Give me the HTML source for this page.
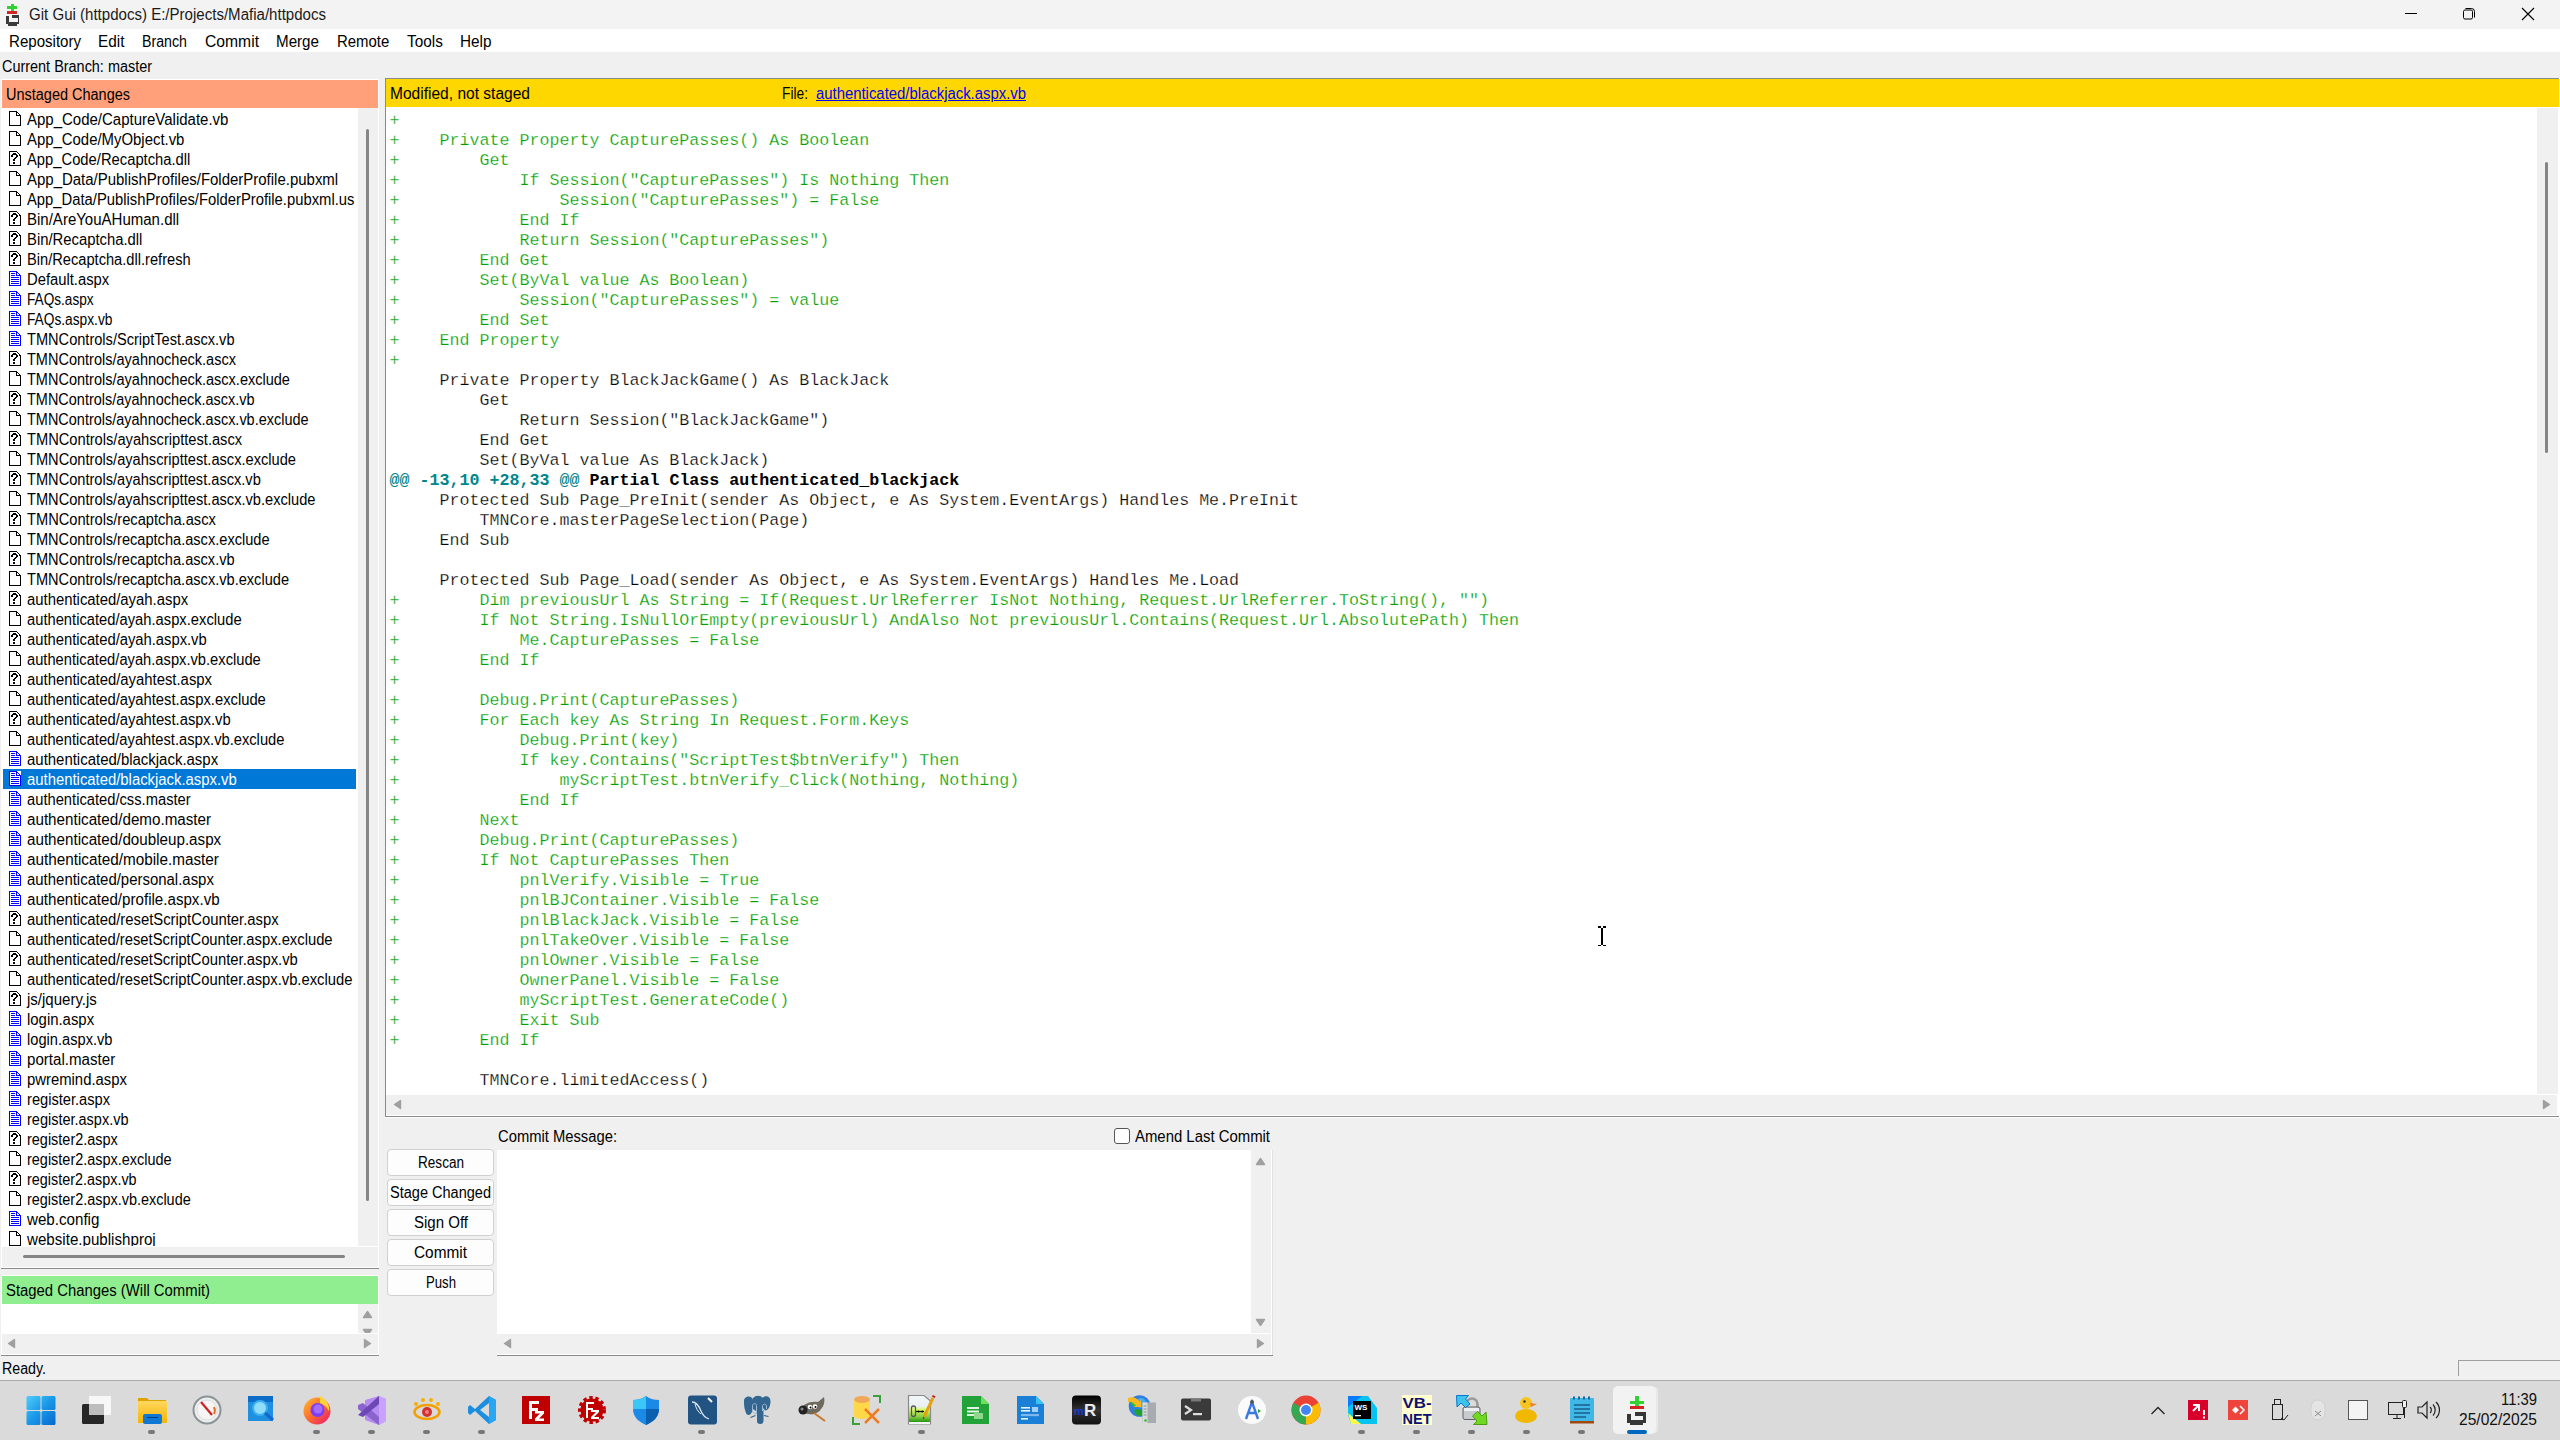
<!DOCTYPE html><html><head><meta charset="utf-8"><style>
*{margin:0;padding:0;box-sizing:border-box}
html,body{width:2560px;height:1440px;overflow:hidden;background:#f0f0f0;position:relative;
font-family:"Liberation Sans",sans-serif;font-size:16px;color:#000}
.a{position:absolute}
.t{position:absolute;white-space:pre;line-height:20px;height:20px}
.mono{font-family:"Liberation Mono",monospace;font-size:16.667px;white-space:pre;line-height:20px;-webkit-text-stroke:0.25px #fff}
.btn{position:absolute;left:387px;width:107px;height:27px;border:1px solid #d0d0d0;border-radius:4px;background:#fdfdfd;
 text-align:center;line-height:25px}
svg{position:absolute;overflow:visible}
</style></head><body>
<div class="a" style="left:0;top:0;width:2560px;height:29px;background:#f3f3f3"></div>
<svg style="left:0;top:0" width="30" height="30" viewBox="0 0 30 30">
<rect x="7" y="6" width="10" height="3" fill="#2fd02f"/><rect x="11" y="4" width="3" height="8" fill="#2fd02f"/>
<rect x="7" y="11" width="10" height="3" fill="#d42525"/>
<path d="M6 16h3v6h9v-4h-6v-3h7v9H17v2H8v-2H6z" fill="#3a3a3a"/>
</svg>
<div class="t" style="left:29.00px;top:5.46px;transform:scaleX(0.9408);transform-origin:0 0;color:#1a1a1a">Git Gui (httpdocs) E:/Projects/Mafia/httpdocs</div>
<div class="a" style="left:2405px;top:13px;width:12px;height:1px;background:#000"></div>
<svg style="left:2460px;top:6px" width="20" height="16" viewBox="0 0 20 16">
<rect x="3.5" y="4" width="9" height="9" rx="1.5" fill="none" stroke="#000" stroke-width="1"/>
<path d="M5.5 2.5h6a3 3 0 0 1 3 3v6" fill="none" stroke="#000" stroke-width="1"/></svg>
<svg style="left:2520px;top:6px" width="16" height="16" viewBox="0 0 16 16">
<path d="M2 2L14 14M14 2L2 14" stroke="#000" stroke-width="1.1"/></svg>
<div class="a" style="left:0;top:29px;width:2560px;height:23px;background:#fff"></div>
<div class="t" style="left:8.50px;top:32.46px;transform:scaleX(0.9415);transform-origin:0 0;">Repository</div>
<div class="t" style="left:98.10px;top:32.46px;transform:scaleX(0.9576);transform-origin:0 0;">Edit</div>
<div class="t" style="left:142.10px;top:32.46px;transform:scaleX(0.8857);transform-origin:0 0;">Branch</div>
<div class="t" style="left:204.50px;top:32.46px;transform:scaleX(0.9799);transform-origin:0 0;">Commit</div>
<div class="t" style="left:275.50px;top:32.46px;transform:scaleX(0.9481);transform-origin:0 0;">Merge</div>
<div class="t" style="left:337.00px;top:32.46px;transform:scaleX(0.9318);transform-origin:0 0;">Remote</div>
<div class="t" style="left:406.50px;top:32.46px;transform:scaleX(0.9585);transform-origin:0 0;">Tools</div>
<div class="t" style="left:460.00px;top:32.46px;transform:scaleX(0.9573);transform-origin:0 0;">Help</div>
<div class="t" style="left:1.50px;top:57.46px;transform:scaleX(0.9021);transform-origin:0 0;">Current Branch: master</div>
<div class="a" style="left:1px;top:79px;width:378px;height:1190px;background:#fff"></div>
<div class="a" style="left:2px;top:80px;width:376px;height:28px;background:#ffa07a"></div>
<div class="t" style="left:6.00px;top:85.46px;transform:scaleX(0.9052);transform-origin:0 0;">Unstaged Changes</div>
<div class="a" style="left:2px;top:108px;width:356px;height:1138px;overflow:hidden">
<svg style="left:7px;top:3px" width="12" height="15" viewBox="0 0 12 15" shape-rendering="crispEdges"><path d="M4 0h1v1h-1zM9 2h1v1h-1zM0 2h1v1h-1zM0 5h1v1h-1zM9 14h1v1h-1zM1 0h1v1h-1zM10 3h1v1h-1zM0 8h1v1h-1zM0 14h1v1h-1zM11 14h1v1h-1zM11 5h1v1h-1zM0 11h1v1h-1zM11 8h1v1h-1zM2 14h1v1h-1zM11 11h1v1h-1zM7 4h1v1h-1zM7 1h1v1h-1zM6 14h1v1h-1zM3 0h1v1h-1zM5 0h1v1h-1zM4 14h1v1h-1zM11 4h1v1h-1zM9 4h1v1h-1zM0 1h1v1h-1zM0 7h1v1h-1zM8 14h1v1h-1zM11 7h1v1h-1zM0 4h1v1h-1zM0 10h1v1h-1zM11 10h1v1h-1zM10 14h1v1h-1zM0 13h1v1h-1zM11 13h1v1h-1zM7 0h1v1h-1zM1 14h1v1h-1zM7 3h1v1h-1zM3 14h1v1h-1zM8 4h1v1h-1zM0 0h1v1h-1zM5 14h1v1h-1zM10 4h1v1h-1zM8 1h1v1h-1zM0 3h1v1h-1zM2 0h1v1h-1zM0 9h1v1h-1zM11 9h1v1h-1zM0 6h1v1h-1zM0 12h1v1h-1zM11 6h1v1h-1zM11 12h1v1h-1zM7 2h1v1h-1zM6 0h1v1h-1zM7 14h1v1h-1z" fill="#000"/></svg>
<div class="t" style="left:25px;top:2.46px;transform:scaleX(0.9369);transform-origin:0 0;">App_Code/CaptureValidate.vb</div>
<svg style="left:7px;top:23px" width="12" height="15" viewBox="0 0 12 15" shape-rendering="crispEdges"><path d="M4 0h1v1h-1zM9 2h1v1h-1zM0 2h1v1h-1zM0 5h1v1h-1zM9 14h1v1h-1zM1 0h1v1h-1zM10 3h1v1h-1zM0 8h1v1h-1zM0 14h1v1h-1zM11 14h1v1h-1zM11 5h1v1h-1zM0 11h1v1h-1zM11 8h1v1h-1zM2 14h1v1h-1zM11 11h1v1h-1zM7 4h1v1h-1zM7 1h1v1h-1zM6 14h1v1h-1zM3 0h1v1h-1zM5 0h1v1h-1zM4 14h1v1h-1zM11 4h1v1h-1zM9 4h1v1h-1zM0 1h1v1h-1zM0 7h1v1h-1zM8 14h1v1h-1zM11 7h1v1h-1zM0 4h1v1h-1zM0 10h1v1h-1zM11 10h1v1h-1zM10 14h1v1h-1zM0 13h1v1h-1zM11 13h1v1h-1zM7 0h1v1h-1zM1 14h1v1h-1zM7 3h1v1h-1zM3 14h1v1h-1zM8 4h1v1h-1zM0 0h1v1h-1zM5 14h1v1h-1zM10 4h1v1h-1zM8 1h1v1h-1zM0 3h1v1h-1zM2 0h1v1h-1zM0 9h1v1h-1zM11 9h1v1h-1zM0 6h1v1h-1zM0 12h1v1h-1zM11 6h1v1h-1zM11 12h1v1h-1zM7 2h1v1h-1zM6 0h1v1h-1zM7 14h1v1h-1z" fill="#000"/></svg>
<div class="t" style="left:25px;top:22.46px;transform:scaleX(0.9315);transform-origin:0 0;">App_Code/MyObject.vb</div>
<svg style="left:7px;top:43px" width="12" height="15" viewBox="0 0 12 15" shape-rendering="crispEdges"><path d="M4 0h1v1h-1zM3 4h1v1h-1zM4 3h1v1h-1zM4 9h1v1h-1zM4 12h1v1h-1zM9 2h1v1h-1zM5 7h1v1h-1zM0 2h1v1h-1zM0 5h1v1h-1zM9 14h1v1h-1zM1 0h1v1h-1zM10 3h1v1h-1zM0 8h1v1h-1zM0 14h1v1h-1zM11 14h1v1h-1zM11 5h1v1h-1zM0 11h1v1h-1zM11 8h1v1h-1zM2 14h1v1h-1zM11 11h1v1h-1zM6 2h1v1h-1zM7 4h1v1h-1zM2 5h1v1h-1zM6 14h1v1h-1zM4 2h1v1h-1zM3 0h1v1h-1zM3 3h1v1h-1zM5 0h1v1h-1zM4 8h1v1h-1zM4 14h1v1h-1zM5 3h1v1h-1zM5 9h1v1h-1zM4 11h1v1h-1zM11 4h1v1h-1zM8 5h1v1h-1zM5 12h1v1h-1zM0 1h1v1h-1zM0 7h1v1h-1zM8 14h1v1h-1zM11 7h1v1h-1zM0 4h1v1h-1zM0 10h1v1h-1zM11 10h1v1h-1zM10 14h1v1h-1zM2 4h1v1h-1zM0 13h1v1h-1zM11 13h1v1h-1zM7 0h1v1h-1zM1 14h1v1h-1zM7 3h1v1h-1zM6 7h1v1h-1zM7 6h1v1h-1zM5 8h1v1h-1zM3 5h1v1h-1zM5 2h1v1h-1zM3 14h1v1h-1zM8 4h1v1h-1zM5 11h1v1h-1zM0 0h1v1h-1zM5 14h1v1h-1zM10 4h1v1h-1zM8 1h1v1h-1zM0 3h1v1h-1zM2 0h1v1h-1zM0 9h1v1h-1zM11 9h1v1h-1zM0 6h1v1h-1zM0 12h1v1h-1zM11 6h1v1h-1zM11 12h1v1h-1zM6 0h1v1h-1zM6 6h1v1h-1zM7 5h1v1h-1zM6 3h1v1h-1zM7 14h1v1h-1z" fill="#000"/></svg>
<div class="t" style="left:25px;top:42.46px;transform:scaleX(0.9231);transform-origin:0 0;">App_Code/Recaptcha.dll</div>
<svg style="left:7px;top:63px" width="12" height="15" viewBox="0 0 12 15" shape-rendering="crispEdges"><path d="M4 0h1v1h-1zM9 2h1v1h-1zM0 2h1v1h-1zM0 5h1v1h-1zM9 14h1v1h-1zM1 0h1v1h-1zM10 3h1v1h-1zM0 8h1v1h-1zM0 14h1v1h-1zM11 14h1v1h-1zM11 5h1v1h-1zM0 11h1v1h-1zM11 8h1v1h-1zM2 14h1v1h-1zM11 11h1v1h-1zM7 4h1v1h-1zM7 1h1v1h-1zM6 14h1v1h-1zM3 0h1v1h-1zM5 0h1v1h-1zM4 14h1v1h-1zM11 4h1v1h-1zM9 4h1v1h-1zM0 1h1v1h-1zM0 7h1v1h-1zM8 14h1v1h-1zM11 7h1v1h-1zM0 4h1v1h-1zM0 10h1v1h-1zM11 10h1v1h-1zM10 14h1v1h-1zM0 13h1v1h-1zM11 13h1v1h-1zM7 0h1v1h-1zM1 14h1v1h-1zM7 3h1v1h-1zM3 14h1v1h-1zM8 4h1v1h-1zM0 0h1v1h-1zM5 14h1v1h-1zM10 4h1v1h-1zM8 1h1v1h-1zM0 3h1v1h-1zM2 0h1v1h-1zM0 9h1v1h-1zM11 9h1v1h-1zM0 6h1v1h-1zM0 12h1v1h-1zM11 6h1v1h-1zM11 12h1v1h-1zM7 2h1v1h-1zM6 0h1v1h-1zM7 14h1v1h-1z" fill="#000"/></svg>
<div class="t" style="left:25px;top:62.46px;transform:scaleX(0.9355);transform-origin:0 0;">App_Data/PublishProfiles/FolderProfile.pubxml</div>
<svg style="left:7px;top:83px" width="12" height="15" viewBox="0 0 12 15" shape-rendering="crispEdges"><path d="M4 0h1v1h-1zM9 2h1v1h-1zM0 2h1v1h-1zM0 5h1v1h-1zM9 14h1v1h-1zM1 0h1v1h-1zM10 3h1v1h-1zM0 8h1v1h-1zM0 14h1v1h-1zM11 14h1v1h-1zM11 5h1v1h-1zM0 11h1v1h-1zM11 8h1v1h-1zM2 14h1v1h-1zM11 11h1v1h-1zM7 4h1v1h-1zM7 1h1v1h-1zM6 14h1v1h-1zM3 0h1v1h-1zM5 0h1v1h-1zM4 14h1v1h-1zM11 4h1v1h-1zM9 4h1v1h-1zM0 1h1v1h-1zM0 7h1v1h-1zM8 14h1v1h-1zM11 7h1v1h-1zM0 4h1v1h-1zM0 10h1v1h-1zM11 10h1v1h-1zM10 14h1v1h-1zM0 13h1v1h-1zM11 13h1v1h-1zM7 0h1v1h-1zM1 14h1v1h-1zM7 3h1v1h-1zM3 14h1v1h-1zM8 4h1v1h-1zM0 0h1v1h-1zM5 14h1v1h-1zM10 4h1v1h-1zM8 1h1v1h-1zM0 3h1v1h-1zM2 0h1v1h-1zM0 9h1v1h-1zM11 9h1v1h-1zM0 6h1v1h-1zM0 12h1v1h-1zM11 6h1v1h-1zM11 12h1v1h-1zM7 2h1v1h-1zM6 0h1v1h-1zM7 14h1v1h-1z" fill="#000"/></svg>
<div class="t" style="left:25px;top:82.46px;transform:scaleX(0.9250);transform-origin:0 0;">App_Data/PublishProfiles/FolderProfile.pubxml.us</div>
<svg style="left:7px;top:103px" width="12" height="15" viewBox="0 0 12 15" shape-rendering="crispEdges"><path d="M4 0h1v1h-1zM3 4h1v1h-1zM4 3h1v1h-1zM4 9h1v1h-1zM4 12h1v1h-1zM9 2h1v1h-1zM5 7h1v1h-1zM0 2h1v1h-1zM0 5h1v1h-1zM9 14h1v1h-1zM1 0h1v1h-1zM10 3h1v1h-1zM0 8h1v1h-1zM0 14h1v1h-1zM11 14h1v1h-1zM11 5h1v1h-1zM0 11h1v1h-1zM11 8h1v1h-1zM2 14h1v1h-1zM11 11h1v1h-1zM6 2h1v1h-1zM7 4h1v1h-1zM2 5h1v1h-1zM6 14h1v1h-1zM4 2h1v1h-1zM3 0h1v1h-1zM3 3h1v1h-1zM5 0h1v1h-1zM4 8h1v1h-1zM4 14h1v1h-1zM5 3h1v1h-1zM5 9h1v1h-1zM4 11h1v1h-1zM11 4h1v1h-1zM8 5h1v1h-1zM5 12h1v1h-1zM0 1h1v1h-1zM0 7h1v1h-1zM8 14h1v1h-1zM11 7h1v1h-1zM0 4h1v1h-1zM0 10h1v1h-1zM11 10h1v1h-1zM10 14h1v1h-1zM2 4h1v1h-1zM0 13h1v1h-1zM11 13h1v1h-1zM7 0h1v1h-1zM1 14h1v1h-1zM7 3h1v1h-1zM6 7h1v1h-1zM7 6h1v1h-1zM5 8h1v1h-1zM3 5h1v1h-1zM5 2h1v1h-1zM3 14h1v1h-1zM8 4h1v1h-1zM5 11h1v1h-1zM0 0h1v1h-1zM5 14h1v1h-1zM10 4h1v1h-1zM8 1h1v1h-1zM0 3h1v1h-1zM2 0h1v1h-1zM0 9h1v1h-1zM11 9h1v1h-1zM0 6h1v1h-1zM0 12h1v1h-1zM11 6h1v1h-1zM11 12h1v1h-1zM6 0h1v1h-1zM6 6h1v1h-1zM7 5h1v1h-1zM6 3h1v1h-1zM7 14h1v1h-1z" fill="#000"/></svg>
<div class="t" style="left:25px;top:102.46px;transform:scaleX(0.9382);transform-origin:0 0;">Bin/AreYouAHuman.dll</div>
<svg style="left:7px;top:123px" width="12" height="15" viewBox="0 0 12 15" shape-rendering="crispEdges"><path d="M4 0h1v1h-1zM3 4h1v1h-1zM4 3h1v1h-1zM4 9h1v1h-1zM4 12h1v1h-1zM9 2h1v1h-1zM5 7h1v1h-1zM0 2h1v1h-1zM0 5h1v1h-1zM9 14h1v1h-1zM1 0h1v1h-1zM10 3h1v1h-1zM0 8h1v1h-1zM0 14h1v1h-1zM11 14h1v1h-1zM11 5h1v1h-1zM0 11h1v1h-1zM11 8h1v1h-1zM2 14h1v1h-1zM11 11h1v1h-1zM6 2h1v1h-1zM7 4h1v1h-1zM2 5h1v1h-1zM6 14h1v1h-1zM4 2h1v1h-1zM3 0h1v1h-1zM3 3h1v1h-1zM5 0h1v1h-1zM4 8h1v1h-1zM4 14h1v1h-1zM5 3h1v1h-1zM5 9h1v1h-1zM4 11h1v1h-1zM11 4h1v1h-1zM8 5h1v1h-1zM5 12h1v1h-1zM0 1h1v1h-1zM0 7h1v1h-1zM8 14h1v1h-1zM11 7h1v1h-1zM0 4h1v1h-1zM0 10h1v1h-1zM11 10h1v1h-1zM10 14h1v1h-1zM2 4h1v1h-1zM0 13h1v1h-1zM11 13h1v1h-1zM7 0h1v1h-1zM1 14h1v1h-1zM7 3h1v1h-1zM6 7h1v1h-1zM7 6h1v1h-1zM5 8h1v1h-1zM3 5h1v1h-1zM5 2h1v1h-1zM3 14h1v1h-1zM8 4h1v1h-1zM5 11h1v1h-1zM0 0h1v1h-1zM5 14h1v1h-1zM10 4h1v1h-1zM8 1h1v1h-1zM0 3h1v1h-1zM2 0h1v1h-1zM0 9h1v1h-1zM11 9h1v1h-1zM0 6h1v1h-1zM0 12h1v1h-1zM11 6h1v1h-1zM11 12h1v1h-1zM6 0h1v1h-1zM6 6h1v1h-1zM7 5h1v1h-1zM6 3h1v1h-1zM7 14h1v1h-1z" fill="#000"/></svg>
<div class="t" style="left:25px;top:122.46px;transform:scaleX(0.9268);transform-origin:0 0;">Bin/Recaptcha.dll</div>
<svg style="left:7px;top:143px" width="12" height="15" viewBox="0 0 12 15" shape-rendering="crispEdges"><path d="M4 0h1v1h-1zM3 4h1v1h-1zM4 3h1v1h-1zM4 9h1v1h-1zM4 12h1v1h-1zM9 2h1v1h-1zM5 7h1v1h-1zM0 2h1v1h-1zM0 5h1v1h-1zM9 14h1v1h-1zM1 0h1v1h-1zM10 3h1v1h-1zM0 8h1v1h-1zM0 14h1v1h-1zM11 14h1v1h-1zM11 5h1v1h-1zM0 11h1v1h-1zM11 8h1v1h-1zM2 14h1v1h-1zM11 11h1v1h-1zM6 2h1v1h-1zM7 4h1v1h-1zM2 5h1v1h-1zM6 14h1v1h-1zM4 2h1v1h-1zM3 0h1v1h-1zM3 3h1v1h-1zM5 0h1v1h-1zM4 8h1v1h-1zM4 14h1v1h-1zM5 3h1v1h-1zM5 9h1v1h-1zM4 11h1v1h-1zM11 4h1v1h-1zM8 5h1v1h-1zM5 12h1v1h-1zM0 1h1v1h-1zM0 7h1v1h-1zM8 14h1v1h-1zM11 7h1v1h-1zM0 4h1v1h-1zM0 10h1v1h-1zM11 10h1v1h-1zM10 14h1v1h-1zM2 4h1v1h-1zM0 13h1v1h-1zM11 13h1v1h-1zM7 0h1v1h-1zM1 14h1v1h-1zM7 3h1v1h-1zM6 7h1v1h-1zM7 6h1v1h-1zM5 8h1v1h-1zM3 5h1v1h-1zM5 2h1v1h-1zM3 14h1v1h-1zM8 4h1v1h-1zM5 11h1v1h-1zM0 0h1v1h-1zM5 14h1v1h-1zM10 4h1v1h-1zM8 1h1v1h-1zM0 3h1v1h-1zM2 0h1v1h-1zM0 9h1v1h-1zM11 9h1v1h-1zM0 6h1v1h-1zM0 12h1v1h-1zM11 6h1v1h-1zM11 12h1v1h-1zM6 0h1v1h-1zM6 6h1v1h-1zM7 5h1v1h-1zM6 3h1v1h-1zM7 14h1v1h-1z" fill="#000"/></svg>
<div class="t" style="left:25px;top:142.46px;transform:scaleX(0.9155);transform-origin:0 0;">Bin/Recaptcha.dll.refresh</div>
<svg style="left:7px;top:163px" width="12" height="15" viewBox="0 0 12 15" shape-rendering="crispEdges"><path d="M4 0h1v1h-1zM5 10h1v1h-1zM9 8h1v1h-1zM0 5h1v1h-1zM2 2h1v1h-1zM11 5h1v1h-1zM0 14h1v1h-1zM11 14h1v1h-1zM7 1h1v1h-1zM7 10h1v1h-1zM4 2h1v1h-1zM3 6h1v1h-1zM5 12h1v1h-1zM9 10h1v1h-1zM0 7h1v1h-1zM11 7h1v1h-1zM2 4h1v1h-1zM7 3h1v1h-1zM7 12h1v1h-1zM3 8h1v1h-1zM8 4h1v1h-1zM0 0h1v1h-1zM5 14h1v1h-1zM9 12h1v1h-1zM0 9h1v1h-1zM11 9h1v1h-1zM6 6h1v1h-1zM7 14h1v1h-1zM3 10h1v1h-1zM0 2h1v1h-1zM9 14h1v1h-1zM5 0h1v1h-1zM3 12h1v1h-1zM11 4h1v1h-1zM7 0h1v1h-1zM1 14h1v1h-1zM5 2h1v1h-1zM4 4h1v1h-1zM3 14h1v1h-1zM2 6h1v1h-1zM7 2h1v1h-1zM5 4h1v1h-1zM4 6h1v1h-1zM9 2h1v1h-1zM8 6h1v1h-1zM10 3h1v1h-1zM1 0h1v1h-1zM0 11h1v1h-1zM11 11h1v1h-1zM2 8h1v1h-1zM7 4h1v1h-1zM6 8h1v1h-1zM3 0h1v1h-1zM5 6h1v1h-1zM4 8h1v1h-1zM8 8h1v1h-1zM0 4h1v1h-1zM10 14h1v1h-1zM0 13h1v1h-1zM11 13h1v1h-1zM2 10h1v1h-1zM6 10h1v1h-1zM3 2h1v1h-1zM4 10h1v1h-1zM8 1h1v1h-1zM8 10h1v1h-1zM0 6h1v1h-1zM11 6h1v1h-1zM2 12h1v1h-1zM6 12h1v1h-1zM3 4h1v1h-1zM4 12h1v1h-1zM8 12h1v1h-1zM0 8h1v1h-1zM11 8h1v1h-1zM2 14h1v1h-1zM6 14h1v1h-1zM4 14h1v1h-1zM9 4h1v1h-1zM0 1h1v1h-1zM8 14h1v1h-1zM0 10h1v1h-1zM11 10h1v1h-1zM7 6h1v1h-1zM5 8h1v1h-1zM10 4h1v1h-1zM9 6h1v1h-1zM0 3h1v1h-1zM2 0h1v1h-1zM0 12h1v1h-1zM11 12h1v1h-1zM6 0h1v1h-1zM7 8h1v1h-1z" fill="#0000ff"/></svg>
<div class="t" style="left:25px;top:162.46px;transform:scaleX(0.9237);transform-origin:0 0;">Default.aspx</div>
<svg style="left:7px;top:183px" width="12" height="15" viewBox="0 0 12 15" shape-rendering="crispEdges"><path d="M4 0h1v1h-1zM5 10h1v1h-1zM9 8h1v1h-1zM0 5h1v1h-1zM2 2h1v1h-1zM11 5h1v1h-1zM0 14h1v1h-1zM11 14h1v1h-1zM7 1h1v1h-1zM7 10h1v1h-1zM4 2h1v1h-1zM3 6h1v1h-1zM5 12h1v1h-1zM9 10h1v1h-1zM0 7h1v1h-1zM11 7h1v1h-1zM2 4h1v1h-1zM7 3h1v1h-1zM7 12h1v1h-1zM3 8h1v1h-1zM8 4h1v1h-1zM0 0h1v1h-1zM5 14h1v1h-1zM9 12h1v1h-1zM0 9h1v1h-1zM11 9h1v1h-1zM6 6h1v1h-1zM7 14h1v1h-1zM3 10h1v1h-1zM0 2h1v1h-1zM9 14h1v1h-1zM5 0h1v1h-1zM3 12h1v1h-1zM11 4h1v1h-1zM7 0h1v1h-1zM1 14h1v1h-1zM5 2h1v1h-1zM4 4h1v1h-1zM3 14h1v1h-1zM2 6h1v1h-1zM7 2h1v1h-1zM5 4h1v1h-1zM4 6h1v1h-1zM9 2h1v1h-1zM8 6h1v1h-1zM10 3h1v1h-1zM1 0h1v1h-1zM0 11h1v1h-1zM11 11h1v1h-1zM2 8h1v1h-1zM7 4h1v1h-1zM6 8h1v1h-1zM3 0h1v1h-1zM5 6h1v1h-1zM4 8h1v1h-1zM8 8h1v1h-1zM0 4h1v1h-1zM10 14h1v1h-1zM0 13h1v1h-1zM11 13h1v1h-1zM2 10h1v1h-1zM6 10h1v1h-1zM3 2h1v1h-1zM4 10h1v1h-1zM8 1h1v1h-1zM8 10h1v1h-1zM0 6h1v1h-1zM11 6h1v1h-1zM2 12h1v1h-1zM6 12h1v1h-1zM3 4h1v1h-1zM4 12h1v1h-1zM8 12h1v1h-1zM0 8h1v1h-1zM11 8h1v1h-1zM2 14h1v1h-1zM6 14h1v1h-1zM4 14h1v1h-1zM9 4h1v1h-1zM0 1h1v1h-1zM8 14h1v1h-1zM0 10h1v1h-1zM11 10h1v1h-1zM7 6h1v1h-1zM5 8h1v1h-1zM10 4h1v1h-1zM9 6h1v1h-1zM0 3h1v1h-1zM2 0h1v1h-1zM0 12h1v1h-1zM11 12h1v1h-1zM6 0h1v1h-1zM7 8h1v1h-1z" fill="#0000ff"/></svg>
<div class="t" style="left:25px;top:182.46px;transform:scaleX(0.8518);transform-origin:0 0;">FAQs.aspx</div>
<svg style="left:7px;top:203px" width="12" height="15" viewBox="0 0 12 15" shape-rendering="crispEdges"><path d="M4 0h1v1h-1zM5 10h1v1h-1zM9 8h1v1h-1zM0 5h1v1h-1zM2 2h1v1h-1zM11 5h1v1h-1zM0 14h1v1h-1zM11 14h1v1h-1zM7 1h1v1h-1zM7 10h1v1h-1zM4 2h1v1h-1zM3 6h1v1h-1zM5 12h1v1h-1zM9 10h1v1h-1zM0 7h1v1h-1zM11 7h1v1h-1zM2 4h1v1h-1zM7 3h1v1h-1zM7 12h1v1h-1zM3 8h1v1h-1zM8 4h1v1h-1zM0 0h1v1h-1zM5 14h1v1h-1zM9 12h1v1h-1zM0 9h1v1h-1zM11 9h1v1h-1zM6 6h1v1h-1zM7 14h1v1h-1zM3 10h1v1h-1zM0 2h1v1h-1zM9 14h1v1h-1zM5 0h1v1h-1zM3 12h1v1h-1zM11 4h1v1h-1zM7 0h1v1h-1zM1 14h1v1h-1zM5 2h1v1h-1zM4 4h1v1h-1zM3 14h1v1h-1zM2 6h1v1h-1zM7 2h1v1h-1zM5 4h1v1h-1zM4 6h1v1h-1zM9 2h1v1h-1zM8 6h1v1h-1zM10 3h1v1h-1zM1 0h1v1h-1zM0 11h1v1h-1zM11 11h1v1h-1zM2 8h1v1h-1zM7 4h1v1h-1zM6 8h1v1h-1zM3 0h1v1h-1zM5 6h1v1h-1zM4 8h1v1h-1zM8 8h1v1h-1zM0 4h1v1h-1zM10 14h1v1h-1zM0 13h1v1h-1zM11 13h1v1h-1zM2 10h1v1h-1zM6 10h1v1h-1zM3 2h1v1h-1zM4 10h1v1h-1zM8 1h1v1h-1zM8 10h1v1h-1zM0 6h1v1h-1zM11 6h1v1h-1zM2 12h1v1h-1zM6 12h1v1h-1zM3 4h1v1h-1zM4 12h1v1h-1zM8 12h1v1h-1zM0 8h1v1h-1zM11 8h1v1h-1zM2 14h1v1h-1zM6 14h1v1h-1zM4 14h1v1h-1zM9 4h1v1h-1zM0 1h1v1h-1zM8 14h1v1h-1zM0 10h1v1h-1zM11 10h1v1h-1zM7 6h1v1h-1zM5 8h1v1h-1zM10 4h1v1h-1zM9 6h1v1h-1zM0 3h1v1h-1zM2 0h1v1h-1zM0 12h1v1h-1zM11 12h1v1h-1zM6 0h1v1h-1zM7 8h1v1h-1z" fill="#0000ff"/></svg>
<div class="t" style="left:25px;top:202.46px;transform:scaleX(0.8575);transform-origin:0 0;">FAQs.aspx.vb</div>
<svg style="left:7px;top:223px" width="12" height="15" viewBox="0 0 12 15" shape-rendering="crispEdges"><path d="M4 0h1v1h-1zM5 10h1v1h-1zM9 8h1v1h-1zM0 5h1v1h-1zM2 2h1v1h-1zM11 5h1v1h-1zM0 14h1v1h-1zM11 14h1v1h-1zM7 1h1v1h-1zM7 10h1v1h-1zM4 2h1v1h-1zM3 6h1v1h-1zM5 12h1v1h-1zM9 10h1v1h-1zM0 7h1v1h-1zM11 7h1v1h-1zM2 4h1v1h-1zM7 3h1v1h-1zM7 12h1v1h-1zM3 8h1v1h-1zM8 4h1v1h-1zM0 0h1v1h-1zM5 14h1v1h-1zM9 12h1v1h-1zM0 9h1v1h-1zM11 9h1v1h-1zM6 6h1v1h-1zM7 14h1v1h-1zM3 10h1v1h-1zM0 2h1v1h-1zM9 14h1v1h-1zM5 0h1v1h-1zM3 12h1v1h-1zM11 4h1v1h-1zM7 0h1v1h-1zM1 14h1v1h-1zM5 2h1v1h-1zM4 4h1v1h-1zM3 14h1v1h-1zM2 6h1v1h-1zM7 2h1v1h-1zM5 4h1v1h-1zM4 6h1v1h-1zM9 2h1v1h-1zM8 6h1v1h-1zM10 3h1v1h-1zM1 0h1v1h-1zM0 11h1v1h-1zM11 11h1v1h-1zM2 8h1v1h-1zM7 4h1v1h-1zM6 8h1v1h-1zM3 0h1v1h-1zM5 6h1v1h-1zM4 8h1v1h-1zM8 8h1v1h-1zM0 4h1v1h-1zM10 14h1v1h-1zM0 13h1v1h-1zM11 13h1v1h-1zM2 10h1v1h-1zM6 10h1v1h-1zM3 2h1v1h-1zM4 10h1v1h-1zM8 1h1v1h-1zM8 10h1v1h-1zM0 6h1v1h-1zM11 6h1v1h-1zM2 12h1v1h-1zM6 12h1v1h-1zM3 4h1v1h-1zM4 12h1v1h-1zM8 12h1v1h-1zM0 8h1v1h-1zM11 8h1v1h-1zM2 14h1v1h-1zM6 14h1v1h-1zM4 14h1v1h-1zM9 4h1v1h-1zM0 1h1v1h-1zM8 14h1v1h-1zM0 10h1v1h-1zM11 10h1v1h-1zM7 6h1v1h-1zM5 8h1v1h-1zM10 4h1v1h-1zM9 6h1v1h-1zM0 3h1v1h-1zM2 0h1v1h-1zM0 12h1v1h-1zM11 12h1v1h-1zM6 0h1v1h-1zM7 8h1v1h-1z" fill="#0000ff"/></svg>
<div class="t" style="left:25px;top:222.46px;transform:scaleX(0.9116);transform-origin:0 0;">TMNControls/ScriptTest.ascx.vb</div>
<svg style="left:7px;top:243px" width="12" height="15" viewBox="0 0 12 15" shape-rendering="crispEdges"><path d="M4 0h1v1h-1zM3 4h1v1h-1zM4 3h1v1h-1zM4 9h1v1h-1zM4 12h1v1h-1zM9 2h1v1h-1zM5 7h1v1h-1zM0 2h1v1h-1zM0 5h1v1h-1zM9 14h1v1h-1zM1 0h1v1h-1zM10 3h1v1h-1zM0 8h1v1h-1zM0 14h1v1h-1zM11 14h1v1h-1zM11 5h1v1h-1zM0 11h1v1h-1zM11 8h1v1h-1zM2 14h1v1h-1zM11 11h1v1h-1zM6 2h1v1h-1zM7 4h1v1h-1zM2 5h1v1h-1zM6 14h1v1h-1zM4 2h1v1h-1zM3 0h1v1h-1zM3 3h1v1h-1zM5 0h1v1h-1zM4 8h1v1h-1zM4 14h1v1h-1zM5 3h1v1h-1zM5 9h1v1h-1zM4 11h1v1h-1zM11 4h1v1h-1zM8 5h1v1h-1zM5 12h1v1h-1zM0 1h1v1h-1zM0 7h1v1h-1zM8 14h1v1h-1zM11 7h1v1h-1zM0 4h1v1h-1zM0 10h1v1h-1zM11 10h1v1h-1zM10 14h1v1h-1zM2 4h1v1h-1zM0 13h1v1h-1zM11 13h1v1h-1zM7 0h1v1h-1zM1 14h1v1h-1zM7 3h1v1h-1zM6 7h1v1h-1zM7 6h1v1h-1zM5 8h1v1h-1zM3 5h1v1h-1zM5 2h1v1h-1zM3 14h1v1h-1zM8 4h1v1h-1zM5 11h1v1h-1zM0 0h1v1h-1zM5 14h1v1h-1zM10 4h1v1h-1zM8 1h1v1h-1zM0 3h1v1h-1zM2 0h1v1h-1zM0 9h1v1h-1zM11 9h1v1h-1zM0 6h1v1h-1zM0 12h1v1h-1zM11 6h1v1h-1zM11 12h1v1h-1zM6 0h1v1h-1zM6 6h1v1h-1zM7 5h1v1h-1zM6 3h1v1h-1zM7 14h1v1h-1z" fill="#000"/></svg>
<div class="t" style="left:25px;top:242.46px;transform:scaleX(0.9070);transform-origin:0 0;">TMNControls/ayahnocheck.ascx</div>
<svg style="left:7px;top:263px" width="12" height="15" viewBox="0 0 12 15" shape-rendering="crispEdges"><path d="M4 0h1v1h-1zM9 2h1v1h-1zM0 2h1v1h-1zM0 5h1v1h-1zM9 14h1v1h-1zM1 0h1v1h-1zM10 3h1v1h-1zM0 8h1v1h-1zM0 14h1v1h-1zM11 14h1v1h-1zM11 5h1v1h-1zM0 11h1v1h-1zM11 8h1v1h-1zM2 14h1v1h-1zM11 11h1v1h-1zM7 4h1v1h-1zM7 1h1v1h-1zM6 14h1v1h-1zM3 0h1v1h-1zM5 0h1v1h-1zM4 14h1v1h-1zM11 4h1v1h-1zM9 4h1v1h-1zM0 1h1v1h-1zM0 7h1v1h-1zM8 14h1v1h-1zM11 7h1v1h-1zM0 4h1v1h-1zM0 10h1v1h-1zM11 10h1v1h-1zM10 14h1v1h-1zM0 13h1v1h-1zM11 13h1v1h-1zM7 0h1v1h-1zM1 14h1v1h-1zM7 3h1v1h-1zM3 14h1v1h-1zM8 4h1v1h-1zM0 0h1v1h-1zM5 14h1v1h-1zM10 4h1v1h-1zM8 1h1v1h-1zM0 3h1v1h-1zM2 0h1v1h-1zM0 9h1v1h-1zM11 9h1v1h-1zM0 6h1v1h-1zM0 12h1v1h-1zM11 6h1v1h-1zM11 12h1v1h-1zM7 2h1v1h-1zM6 0h1v1h-1zM7 14h1v1h-1z" fill="#000"/></svg>
<div class="t" style="left:25px;top:262.46px;transform:scaleX(0.9068);transform-origin:0 0;">TMNControls/ayahnocheck.ascx.exclude</div>
<svg style="left:7px;top:283px" width="12" height="15" viewBox="0 0 12 15" shape-rendering="crispEdges"><path d="M4 0h1v1h-1zM3 4h1v1h-1zM4 3h1v1h-1zM4 9h1v1h-1zM4 12h1v1h-1zM9 2h1v1h-1zM5 7h1v1h-1zM0 2h1v1h-1zM0 5h1v1h-1zM9 14h1v1h-1zM1 0h1v1h-1zM10 3h1v1h-1zM0 8h1v1h-1zM0 14h1v1h-1zM11 14h1v1h-1zM11 5h1v1h-1zM0 11h1v1h-1zM11 8h1v1h-1zM2 14h1v1h-1zM11 11h1v1h-1zM6 2h1v1h-1zM7 4h1v1h-1zM2 5h1v1h-1zM6 14h1v1h-1zM4 2h1v1h-1zM3 0h1v1h-1zM3 3h1v1h-1zM5 0h1v1h-1zM4 8h1v1h-1zM4 14h1v1h-1zM5 3h1v1h-1zM5 9h1v1h-1zM4 11h1v1h-1zM11 4h1v1h-1zM8 5h1v1h-1zM5 12h1v1h-1zM0 1h1v1h-1zM0 7h1v1h-1zM8 14h1v1h-1zM11 7h1v1h-1zM0 4h1v1h-1zM0 10h1v1h-1zM11 10h1v1h-1zM10 14h1v1h-1zM2 4h1v1h-1zM0 13h1v1h-1zM11 13h1v1h-1zM7 0h1v1h-1zM1 14h1v1h-1zM7 3h1v1h-1zM6 7h1v1h-1zM7 6h1v1h-1zM5 8h1v1h-1zM3 5h1v1h-1zM5 2h1v1h-1zM3 14h1v1h-1zM8 4h1v1h-1zM5 11h1v1h-1zM0 0h1v1h-1zM5 14h1v1h-1zM10 4h1v1h-1zM8 1h1v1h-1zM0 3h1v1h-1zM2 0h1v1h-1zM0 9h1v1h-1zM11 9h1v1h-1zM0 6h1v1h-1zM0 12h1v1h-1zM11 6h1v1h-1zM11 12h1v1h-1zM6 0h1v1h-1zM6 6h1v1h-1zM7 5h1v1h-1zM6 3h1v1h-1zM7 14h1v1h-1z" fill="#000"/></svg>
<div class="t" style="left:25px;top:282.46px;transform:scaleX(0.9044);transform-origin:0 0;">TMNControls/ayahnocheck.ascx.vb</div>
<svg style="left:7px;top:303px" width="12" height="15" viewBox="0 0 12 15" shape-rendering="crispEdges"><path d="M4 0h1v1h-1zM9 2h1v1h-1zM0 2h1v1h-1zM0 5h1v1h-1zM9 14h1v1h-1zM1 0h1v1h-1zM10 3h1v1h-1zM0 8h1v1h-1zM0 14h1v1h-1zM11 14h1v1h-1zM11 5h1v1h-1zM0 11h1v1h-1zM11 8h1v1h-1zM2 14h1v1h-1zM11 11h1v1h-1zM7 4h1v1h-1zM7 1h1v1h-1zM6 14h1v1h-1zM3 0h1v1h-1zM5 0h1v1h-1zM4 14h1v1h-1zM11 4h1v1h-1zM9 4h1v1h-1zM0 1h1v1h-1zM0 7h1v1h-1zM8 14h1v1h-1zM11 7h1v1h-1zM0 4h1v1h-1zM0 10h1v1h-1zM11 10h1v1h-1zM10 14h1v1h-1zM0 13h1v1h-1zM11 13h1v1h-1zM7 0h1v1h-1zM1 14h1v1h-1zM7 3h1v1h-1zM3 14h1v1h-1zM8 4h1v1h-1zM0 0h1v1h-1zM5 14h1v1h-1zM10 4h1v1h-1zM8 1h1v1h-1zM0 3h1v1h-1zM2 0h1v1h-1zM0 9h1v1h-1zM11 9h1v1h-1zM0 6h1v1h-1zM0 12h1v1h-1zM11 6h1v1h-1zM11 12h1v1h-1zM7 2h1v1h-1zM6 0h1v1h-1zM7 14h1v1h-1z" fill="#000"/></svg>
<div class="t" style="left:25px;top:302.46px;transform:scaleX(0.9047);transform-origin:0 0;">TMNControls/ayahnocheck.ascx.vb.exclude</div>
<svg style="left:7px;top:323px" width="12" height="15" viewBox="0 0 12 15" shape-rendering="crispEdges"><path d="M4 0h1v1h-1zM3 4h1v1h-1zM4 3h1v1h-1zM4 9h1v1h-1zM4 12h1v1h-1zM9 2h1v1h-1zM5 7h1v1h-1zM0 2h1v1h-1zM0 5h1v1h-1zM9 14h1v1h-1zM1 0h1v1h-1zM10 3h1v1h-1zM0 8h1v1h-1zM0 14h1v1h-1zM11 14h1v1h-1zM11 5h1v1h-1zM0 11h1v1h-1zM11 8h1v1h-1zM2 14h1v1h-1zM11 11h1v1h-1zM6 2h1v1h-1zM7 4h1v1h-1zM2 5h1v1h-1zM6 14h1v1h-1zM4 2h1v1h-1zM3 0h1v1h-1zM3 3h1v1h-1zM5 0h1v1h-1zM4 8h1v1h-1zM4 14h1v1h-1zM5 3h1v1h-1zM5 9h1v1h-1zM4 11h1v1h-1zM11 4h1v1h-1zM8 5h1v1h-1zM5 12h1v1h-1zM0 1h1v1h-1zM0 7h1v1h-1zM8 14h1v1h-1zM11 7h1v1h-1zM0 4h1v1h-1zM0 10h1v1h-1zM11 10h1v1h-1zM10 14h1v1h-1zM2 4h1v1h-1zM0 13h1v1h-1zM11 13h1v1h-1zM7 0h1v1h-1zM1 14h1v1h-1zM7 3h1v1h-1zM6 7h1v1h-1zM7 6h1v1h-1zM5 8h1v1h-1zM3 5h1v1h-1zM5 2h1v1h-1zM3 14h1v1h-1zM8 4h1v1h-1zM5 11h1v1h-1zM0 0h1v1h-1zM5 14h1v1h-1zM10 4h1v1h-1zM8 1h1v1h-1zM0 3h1v1h-1zM2 0h1v1h-1zM0 9h1v1h-1zM11 9h1v1h-1zM0 6h1v1h-1zM0 12h1v1h-1zM11 6h1v1h-1zM11 12h1v1h-1zM6 0h1v1h-1zM6 6h1v1h-1zM7 5h1v1h-1zM6 3h1v1h-1zM7 14h1v1h-1z" fill="#000"/></svg>
<div class="t" style="left:25px;top:322.46px;transform:scaleX(0.9164);transform-origin:0 0;">TMNControls/ayahscripttest.ascx</div>
<svg style="left:7px;top:343px" width="12" height="15" viewBox="0 0 12 15" shape-rendering="crispEdges"><path d="M4 0h1v1h-1zM9 2h1v1h-1zM0 2h1v1h-1zM0 5h1v1h-1zM9 14h1v1h-1zM1 0h1v1h-1zM10 3h1v1h-1zM0 8h1v1h-1zM0 14h1v1h-1zM11 14h1v1h-1zM11 5h1v1h-1zM0 11h1v1h-1zM11 8h1v1h-1zM2 14h1v1h-1zM11 11h1v1h-1zM7 4h1v1h-1zM7 1h1v1h-1zM6 14h1v1h-1zM3 0h1v1h-1zM5 0h1v1h-1zM4 14h1v1h-1zM11 4h1v1h-1zM9 4h1v1h-1zM0 1h1v1h-1zM0 7h1v1h-1zM8 14h1v1h-1zM11 7h1v1h-1zM0 4h1v1h-1zM0 10h1v1h-1zM11 10h1v1h-1zM10 14h1v1h-1zM0 13h1v1h-1zM11 13h1v1h-1zM7 0h1v1h-1zM1 14h1v1h-1zM7 3h1v1h-1zM3 14h1v1h-1zM8 4h1v1h-1zM0 0h1v1h-1zM5 14h1v1h-1zM10 4h1v1h-1zM8 1h1v1h-1zM0 3h1v1h-1zM2 0h1v1h-1zM0 9h1v1h-1zM11 9h1v1h-1zM0 6h1v1h-1zM0 12h1v1h-1zM11 6h1v1h-1zM11 12h1v1h-1zM7 2h1v1h-1zM6 0h1v1h-1zM7 14h1v1h-1z" fill="#000"/></svg>
<div class="t" style="left:25px;top:342.46px;transform:scaleX(0.9136);transform-origin:0 0;">TMNControls/ayahscripttest.ascx.exclude</div>
<svg style="left:7px;top:363px" width="12" height="15" viewBox="0 0 12 15" shape-rendering="crispEdges"><path d="M4 0h1v1h-1zM3 4h1v1h-1zM4 3h1v1h-1zM4 9h1v1h-1zM4 12h1v1h-1zM9 2h1v1h-1zM5 7h1v1h-1zM0 2h1v1h-1zM0 5h1v1h-1zM9 14h1v1h-1zM1 0h1v1h-1zM10 3h1v1h-1zM0 8h1v1h-1zM0 14h1v1h-1zM11 14h1v1h-1zM11 5h1v1h-1zM0 11h1v1h-1zM11 8h1v1h-1zM2 14h1v1h-1zM11 11h1v1h-1zM6 2h1v1h-1zM7 4h1v1h-1zM2 5h1v1h-1zM6 14h1v1h-1zM4 2h1v1h-1zM3 0h1v1h-1zM3 3h1v1h-1zM5 0h1v1h-1zM4 8h1v1h-1zM4 14h1v1h-1zM5 3h1v1h-1zM5 9h1v1h-1zM4 11h1v1h-1zM11 4h1v1h-1zM8 5h1v1h-1zM5 12h1v1h-1zM0 1h1v1h-1zM0 7h1v1h-1zM8 14h1v1h-1zM11 7h1v1h-1zM0 4h1v1h-1zM0 10h1v1h-1zM11 10h1v1h-1zM10 14h1v1h-1zM2 4h1v1h-1zM0 13h1v1h-1zM11 13h1v1h-1zM7 0h1v1h-1zM1 14h1v1h-1zM7 3h1v1h-1zM6 7h1v1h-1zM7 6h1v1h-1zM5 8h1v1h-1zM3 5h1v1h-1zM5 2h1v1h-1zM3 14h1v1h-1zM8 4h1v1h-1zM5 11h1v1h-1zM0 0h1v1h-1zM5 14h1v1h-1zM10 4h1v1h-1zM8 1h1v1h-1zM0 3h1v1h-1zM2 0h1v1h-1zM0 9h1v1h-1zM11 9h1v1h-1zM0 6h1v1h-1zM0 12h1v1h-1zM11 6h1v1h-1zM11 12h1v1h-1zM6 0h1v1h-1zM6 6h1v1h-1zM7 5h1v1h-1zM6 3h1v1h-1zM7 14h1v1h-1z" fill="#000"/></svg>
<div class="t" style="left:25px;top:362.46px;transform:scaleX(0.9130);transform-origin:0 0;">TMNControls/ayahscripttest.ascx.vb</div>
<svg style="left:7px;top:383px" width="12" height="15" viewBox="0 0 12 15" shape-rendering="crispEdges"><path d="M4 0h1v1h-1zM9 2h1v1h-1zM0 2h1v1h-1zM0 5h1v1h-1zM9 14h1v1h-1zM1 0h1v1h-1zM10 3h1v1h-1zM0 8h1v1h-1zM0 14h1v1h-1zM11 14h1v1h-1zM11 5h1v1h-1zM0 11h1v1h-1zM11 8h1v1h-1zM2 14h1v1h-1zM11 11h1v1h-1zM7 4h1v1h-1zM7 1h1v1h-1zM6 14h1v1h-1zM3 0h1v1h-1zM5 0h1v1h-1zM4 14h1v1h-1zM11 4h1v1h-1zM9 4h1v1h-1zM0 1h1v1h-1zM0 7h1v1h-1zM8 14h1v1h-1zM11 7h1v1h-1zM0 4h1v1h-1zM0 10h1v1h-1zM11 10h1v1h-1zM10 14h1v1h-1zM0 13h1v1h-1zM11 13h1v1h-1zM7 0h1v1h-1zM1 14h1v1h-1zM7 3h1v1h-1zM3 14h1v1h-1zM8 4h1v1h-1zM0 0h1v1h-1zM5 14h1v1h-1zM10 4h1v1h-1zM8 1h1v1h-1zM0 3h1v1h-1zM2 0h1v1h-1zM0 9h1v1h-1zM11 9h1v1h-1zM0 6h1v1h-1zM0 12h1v1h-1zM11 6h1v1h-1zM11 12h1v1h-1zM7 2h1v1h-1zM6 0h1v1h-1zM7 14h1v1h-1z" fill="#000"/></svg>
<div class="t" style="left:25px;top:382.46px;transform:scaleX(0.9136);transform-origin:0 0;">TMNControls/ayahscripttest.ascx.vb.exclude</div>
<svg style="left:7px;top:403px" width="12" height="15" viewBox="0 0 12 15" shape-rendering="crispEdges"><path d="M4 0h1v1h-1zM3 4h1v1h-1zM4 3h1v1h-1zM4 9h1v1h-1zM4 12h1v1h-1zM9 2h1v1h-1zM5 7h1v1h-1zM0 2h1v1h-1zM0 5h1v1h-1zM9 14h1v1h-1zM1 0h1v1h-1zM10 3h1v1h-1zM0 8h1v1h-1zM0 14h1v1h-1zM11 14h1v1h-1zM11 5h1v1h-1zM0 11h1v1h-1zM11 8h1v1h-1zM2 14h1v1h-1zM11 11h1v1h-1zM6 2h1v1h-1zM7 4h1v1h-1zM2 5h1v1h-1zM6 14h1v1h-1zM4 2h1v1h-1zM3 0h1v1h-1zM3 3h1v1h-1zM5 0h1v1h-1zM4 8h1v1h-1zM4 14h1v1h-1zM5 3h1v1h-1zM5 9h1v1h-1zM4 11h1v1h-1zM11 4h1v1h-1zM8 5h1v1h-1zM5 12h1v1h-1zM0 1h1v1h-1zM0 7h1v1h-1zM8 14h1v1h-1zM11 7h1v1h-1zM0 4h1v1h-1zM0 10h1v1h-1zM11 10h1v1h-1zM10 14h1v1h-1zM2 4h1v1h-1zM0 13h1v1h-1zM11 13h1v1h-1zM7 0h1v1h-1zM1 14h1v1h-1zM7 3h1v1h-1zM6 7h1v1h-1zM7 6h1v1h-1zM5 8h1v1h-1zM3 5h1v1h-1zM5 2h1v1h-1zM3 14h1v1h-1zM8 4h1v1h-1zM5 11h1v1h-1zM0 0h1v1h-1zM5 14h1v1h-1zM10 4h1v1h-1zM8 1h1v1h-1zM0 3h1v1h-1zM2 0h1v1h-1zM0 9h1v1h-1zM11 9h1v1h-1zM0 6h1v1h-1zM0 12h1v1h-1zM11 6h1v1h-1zM11 12h1v1h-1zM6 0h1v1h-1zM6 6h1v1h-1zM7 5h1v1h-1zM6 3h1v1h-1zM7 14h1v1h-1z" fill="#000"/></svg>
<div class="t" style="left:25px;top:402.46px;transform:scaleX(0.9152);transform-origin:0 0;">TMNControls/recaptcha.ascx</div>
<svg style="left:7px;top:423px" width="12" height="15" viewBox="0 0 12 15" shape-rendering="crispEdges"><path d="M4 0h1v1h-1zM9 2h1v1h-1zM0 2h1v1h-1zM0 5h1v1h-1zM9 14h1v1h-1zM1 0h1v1h-1zM10 3h1v1h-1zM0 8h1v1h-1zM0 14h1v1h-1zM11 14h1v1h-1zM11 5h1v1h-1zM0 11h1v1h-1zM11 8h1v1h-1zM2 14h1v1h-1zM11 11h1v1h-1zM7 4h1v1h-1zM7 1h1v1h-1zM6 14h1v1h-1zM3 0h1v1h-1zM5 0h1v1h-1zM4 14h1v1h-1zM11 4h1v1h-1zM9 4h1v1h-1zM0 1h1v1h-1zM0 7h1v1h-1zM8 14h1v1h-1zM11 7h1v1h-1zM0 4h1v1h-1zM0 10h1v1h-1zM11 10h1v1h-1zM10 14h1v1h-1zM0 13h1v1h-1zM11 13h1v1h-1zM7 0h1v1h-1zM1 14h1v1h-1zM7 3h1v1h-1zM3 14h1v1h-1zM8 4h1v1h-1zM0 0h1v1h-1zM5 14h1v1h-1zM10 4h1v1h-1zM8 1h1v1h-1zM0 3h1v1h-1zM2 0h1v1h-1zM0 9h1v1h-1zM11 9h1v1h-1zM0 6h1v1h-1zM0 12h1v1h-1zM11 6h1v1h-1zM11 12h1v1h-1zM7 2h1v1h-1zM6 0h1v1h-1zM7 14h1v1h-1z" fill="#000"/></svg>
<div class="t" style="left:25px;top:422.46px;transform:scaleX(0.9124);transform-origin:0 0;">TMNControls/recaptcha.ascx.exclude</div>
<svg style="left:7px;top:443px" width="12" height="15" viewBox="0 0 12 15" shape-rendering="crispEdges"><path d="M4 0h1v1h-1zM3 4h1v1h-1zM4 3h1v1h-1zM4 9h1v1h-1zM4 12h1v1h-1zM9 2h1v1h-1zM5 7h1v1h-1zM0 2h1v1h-1zM0 5h1v1h-1zM9 14h1v1h-1zM1 0h1v1h-1zM10 3h1v1h-1zM0 8h1v1h-1zM0 14h1v1h-1zM11 14h1v1h-1zM11 5h1v1h-1zM0 11h1v1h-1zM11 8h1v1h-1zM2 14h1v1h-1zM11 11h1v1h-1zM6 2h1v1h-1zM7 4h1v1h-1zM2 5h1v1h-1zM6 14h1v1h-1zM4 2h1v1h-1zM3 0h1v1h-1zM3 3h1v1h-1zM5 0h1v1h-1zM4 8h1v1h-1zM4 14h1v1h-1zM5 3h1v1h-1zM5 9h1v1h-1zM4 11h1v1h-1zM11 4h1v1h-1zM8 5h1v1h-1zM5 12h1v1h-1zM0 1h1v1h-1zM0 7h1v1h-1zM8 14h1v1h-1zM11 7h1v1h-1zM0 4h1v1h-1zM0 10h1v1h-1zM11 10h1v1h-1zM10 14h1v1h-1zM2 4h1v1h-1zM0 13h1v1h-1zM11 13h1v1h-1zM7 0h1v1h-1zM1 14h1v1h-1zM7 3h1v1h-1zM6 7h1v1h-1zM7 6h1v1h-1zM5 8h1v1h-1zM3 5h1v1h-1zM5 2h1v1h-1zM3 14h1v1h-1zM8 4h1v1h-1zM5 11h1v1h-1zM0 0h1v1h-1zM5 14h1v1h-1zM10 4h1v1h-1zM8 1h1v1h-1zM0 3h1v1h-1zM2 0h1v1h-1zM0 9h1v1h-1zM11 9h1v1h-1zM0 6h1v1h-1zM0 12h1v1h-1zM11 6h1v1h-1zM11 12h1v1h-1zM6 0h1v1h-1zM6 6h1v1h-1zM7 5h1v1h-1zM6 3h1v1h-1zM7 14h1v1h-1z" fill="#000"/></svg>
<div class="t" style="left:25px;top:442.46px;transform:scaleX(0.9120);transform-origin:0 0;">TMNControls/recaptcha.ascx.vb</div>
<svg style="left:7px;top:463px" width="12" height="15" viewBox="0 0 12 15" shape-rendering="crispEdges"><path d="M4 0h1v1h-1zM9 2h1v1h-1zM0 2h1v1h-1zM0 5h1v1h-1zM9 14h1v1h-1zM1 0h1v1h-1zM10 3h1v1h-1zM0 8h1v1h-1zM0 14h1v1h-1zM11 14h1v1h-1zM11 5h1v1h-1zM0 11h1v1h-1zM11 8h1v1h-1zM2 14h1v1h-1zM11 11h1v1h-1zM7 4h1v1h-1zM7 1h1v1h-1zM6 14h1v1h-1zM3 0h1v1h-1zM5 0h1v1h-1zM4 14h1v1h-1zM11 4h1v1h-1zM9 4h1v1h-1zM0 1h1v1h-1zM0 7h1v1h-1zM8 14h1v1h-1zM11 7h1v1h-1zM0 4h1v1h-1zM0 10h1v1h-1zM11 10h1v1h-1zM10 14h1v1h-1zM0 13h1v1h-1zM11 13h1v1h-1zM7 0h1v1h-1zM1 14h1v1h-1zM7 3h1v1h-1zM3 14h1v1h-1zM8 4h1v1h-1zM0 0h1v1h-1zM5 14h1v1h-1zM10 4h1v1h-1zM8 1h1v1h-1zM0 3h1v1h-1zM2 0h1v1h-1zM0 9h1v1h-1zM11 9h1v1h-1zM0 6h1v1h-1zM0 12h1v1h-1zM11 6h1v1h-1zM11 12h1v1h-1zM7 2h1v1h-1zM6 0h1v1h-1zM7 14h1v1h-1z" fill="#000"/></svg>
<div class="t" style="left:25px;top:462.46px;transform:scaleX(0.9122);transform-origin:0 0;">TMNControls/recaptcha.ascx.vb.exclude</div>
<svg style="left:7px;top:483px" width="12" height="15" viewBox="0 0 12 15" shape-rendering="crispEdges"><path d="M4 0h1v1h-1zM3 4h1v1h-1zM4 3h1v1h-1zM4 9h1v1h-1zM4 12h1v1h-1zM9 2h1v1h-1zM5 7h1v1h-1zM0 2h1v1h-1zM0 5h1v1h-1zM9 14h1v1h-1zM1 0h1v1h-1zM10 3h1v1h-1zM0 8h1v1h-1zM0 14h1v1h-1zM11 14h1v1h-1zM11 5h1v1h-1zM0 11h1v1h-1zM11 8h1v1h-1zM2 14h1v1h-1zM11 11h1v1h-1zM6 2h1v1h-1zM7 4h1v1h-1zM2 5h1v1h-1zM6 14h1v1h-1zM4 2h1v1h-1zM3 0h1v1h-1zM3 3h1v1h-1zM5 0h1v1h-1zM4 8h1v1h-1zM4 14h1v1h-1zM5 3h1v1h-1zM5 9h1v1h-1zM4 11h1v1h-1zM11 4h1v1h-1zM8 5h1v1h-1zM5 12h1v1h-1zM0 1h1v1h-1zM0 7h1v1h-1zM8 14h1v1h-1zM11 7h1v1h-1zM0 4h1v1h-1zM0 10h1v1h-1zM11 10h1v1h-1zM10 14h1v1h-1zM2 4h1v1h-1zM0 13h1v1h-1zM11 13h1v1h-1zM7 0h1v1h-1zM1 14h1v1h-1zM7 3h1v1h-1zM6 7h1v1h-1zM7 6h1v1h-1zM5 8h1v1h-1zM3 5h1v1h-1zM5 2h1v1h-1zM3 14h1v1h-1zM8 4h1v1h-1zM5 11h1v1h-1zM0 0h1v1h-1zM5 14h1v1h-1zM10 4h1v1h-1zM8 1h1v1h-1zM0 3h1v1h-1zM2 0h1v1h-1zM0 9h1v1h-1zM11 9h1v1h-1zM0 6h1v1h-1zM0 12h1v1h-1zM11 6h1v1h-1zM11 12h1v1h-1zM6 0h1v1h-1zM6 6h1v1h-1zM7 5h1v1h-1zM6 3h1v1h-1zM7 14h1v1h-1z" fill="#000"/></svg>
<div class="t" style="left:25px;top:482.46px;transform:scaleX(0.9287);transform-origin:0 0;">authenticated/ayah.aspx</div>
<svg style="left:7px;top:503px" width="12" height="15" viewBox="0 0 12 15" shape-rendering="crispEdges"><path d="M4 0h1v1h-1zM9 2h1v1h-1zM0 2h1v1h-1zM0 5h1v1h-1zM9 14h1v1h-1zM1 0h1v1h-1zM10 3h1v1h-1zM0 8h1v1h-1zM0 14h1v1h-1zM11 14h1v1h-1zM11 5h1v1h-1zM0 11h1v1h-1zM11 8h1v1h-1zM2 14h1v1h-1zM11 11h1v1h-1zM7 4h1v1h-1zM7 1h1v1h-1zM6 14h1v1h-1zM3 0h1v1h-1zM5 0h1v1h-1zM4 14h1v1h-1zM11 4h1v1h-1zM9 4h1v1h-1zM0 1h1v1h-1zM0 7h1v1h-1zM8 14h1v1h-1zM11 7h1v1h-1zM0 4h1v1h-1zM0 10h1v1h-1zM11 10h1v1h-1zM10 14h1v1h-1zM0 13h1v1h-1zM11 13h1v1h-1zM7 0h1v1h-1zM1 14h1v1h-1zM7 3h1v1h-1zM3 14h1v1h-1zM8 4h1v1h-1zM0 0h1v1h-1zM5 14h1v1h-1zM10 4h1v1h-1zM8 1h1v1h-1zM0 3h1v1h-1zM2 0h1v1h-1zM0 9h1v1h-1zM11 9h1v1h-1zM0 6h1v1h-1zM0 12h1v1h-1zM11 6h1v1h-1zM11 12h1v1h-1zM7 2h1v1h-1zM6 0h1v1h-1zM7 14h1v1h-1z" fill="#000"/></svg>
<div class="t" style="left:25px;top:502.46px;transform:scaleX(0.9208);transform-origin:0 0;">authenticated/ayah.aspx.exclude</div>
<svg style="left:7px;top:523px" width="12" height="15" viewBox="0 0 12 15" shape-rendering="crispEdges"><path d="M4 0h1v1h-1zM3 4h1v1h-1zM4 3h1v1h-1zM4 9h1v1h-1zM4 12h1v1h-1zM9 2h1v1h-1zM5 7h1v1h-1zM0 2h1v1h-1zM0 5h1v1h-1zM9 14h1v1h-1zM1 0h1v1h-1zM10 3h1v1h-1zM0 8h1v1h-1zM0 14h1v1h-1zM11 14h1v1h-1zM11 5h1v1h-1zM0 11h1v1h-1zM11 8h1v1h-1zM2 14h1v1h-1zM11 11h1v1h-1zM6 2h1v1h-1zM7 4h1v1h-1zM2 5h1v1h-1zM6 14h1v1h-1zM4 2h1v1h-1zM3 0h1v1h-1zM3 3h1v1h-1zM5 0h1v1h-1zM4 8h1v1h-1zM4 14h1v1h-1zM5 3h1v1h-1zM5 9h1v1h-1zM4 11h1v1h-1zM11 4h1v1h-1zM8 5h1v1h-1zM5 12h1v1h-1zM0 1h1v1h-1zM0 7h1v1h-1zM8 14h1v1h-1zM11 7h1v1h-1zM0 4h1v1h-1zM0 10h1v1h-1zM11 10h1v1h-1zM10 14h1v1h-1zM2 4h1v1h-1zM0 13h1v1h-1zM11 13h1v1h-1zM7 0h1v1h-1zM1 14h1v1h-1zM7 3h1v1h-1zM6 7h1v1h-1zM7 6h1v1h-1zM5 8h1v1h-1zM3 5h1v1h-1zM5 2h1v1h-1zM3 14h1v1h-1zM8 4h1v1h-1zM5 11h1v1h-1zM0 0h1v1h-1zM5 14h1v1h-1zM10 4h1v1h-1zM8 1h1v1h-1zM0 3h1v1h-1zM2 0h1v1h-1zM0 9h1v1h-1zM11 9h1v1h-1zM0 6h1v1h-1zM0 12h1v1h-1zM11 6h1v1h-1zM11 12h1v1h-1zM6 0h1v1h-1zM6 6h1v1h-1zM7 5h1v1h-1zM6 3h1v1h-1zM7 14h1v1h-1z" fill="#000"/></svg>
<div class="t" style="left:25px;top:522.46px;transform:scaleX(0.9225);transform-origin:0 0;">authenticated/ayah.aspx.vb</div>
<svg style="left:7px;top:543px" width="12" height="15" viewBox="0 0 12 15" shape-rendering="crispEdges"><path d="M4 0h1v1h-1zM9 2h1v1h-1zM0 2h1v1h-1zM0 5h1v1h-1zM9 14h1v1h-1zM1 0h1v1h-1zM10 3h1v1h-1zM0 8h1v1h-1zM0 14h1v1h-1zM11 14h1v1h-1zM11 5h1v1h-1zM0 11h1v1h-1zM11 8h1v1h-1zM2 14h1v1h-1zM11 11h1v1h-1zM7 4h1v1h-1zM7 1h1v1h-1zM6 14h1v1h-1zM3 0h1v1h-1zM5 0h1v1h-1zM4 14h1v1h-1zM11 4h1v1h-1zM9 4h1v1h-1zM0 1h1v1h-1zM0 7h1v1h-1zM8 14h1v1h-1zM11 7h1v1h-1zM0 4h1v1h-1zM0 10h1v1h-1zM11 10h1v1h-1zM10 14h1v1h-1zM0 13h1v1h-1zM11 13h1v1h-1zM7 0h1v1h-1zM1 14h1v1h-1zM7 3h1v1h-1zM3 14h1v1h-1zM8 4h1v1h-1zM0 0h1v1h-1zM5 14h1v1h-1zM10 4h1v1h-1zM8 1h1v1h-1zM0 3h1v1h-1zM2 0h1v1h-1zM0 9h1v1h-1zM11 9h1v1h-1zM0 6h1v1h-1zM0 12h1v1h-1zM11 6h1v1h-1zM11 12h1v1h-1zM7 2h1v1h-1zM6 0h1v1h-1zM7 14h1v1h-1z" fill="#000"/></svg>
<div class="t" style="left:25px;top:542.46px;transform:scaleX(0.9190);transform-origin:0 0;">authenticated/ayah.aspx.vb.exclude</div>
<svg style="left:7px;top:563px" width="12" height="15" viewBox="0 0 12 15" shape-rendering="crispEdges"><path d="M4 0h1v1h-1zM3 4h1v1h-1zM4 3h1v1h-1zM4 9h1v1h-1zM4 12h1v1h-1zM9 2h1v1h-1zM5 7h1v1h-1zM0 2h1v1h-1zM0 5h1v1h-1zM9 14h1v1h-1zM1 0h1v1h-1zM10 3h1v1h-1zM0 8h1v1h-1zM0 14h1v1h-1zM11 14h1v1h-1zM11 5h1v1h-1zM0 11h1v1h-1zM11 8h1v1h-1zM2 14h1v1h-1zM11 11h1v1h-1zM6 2h1v1h-1zM7 4h1v1h-1zM2 5h1v1h-1zM6 14h1v1h-1zM4 2h1v1h-1zM3 0h1v1h-1zM3 3h1v1h-1zM5 0h1v1h-1zM4 8h1v1h-1zM4 14h1v1h-1zM5 3h1v1h-1zM5 9h1v1h-1zM4 11h1v1h-1zM11 4h1v1h-1zM8 5h1v1h-1zM5 12h1v1h-1zM0 1h1v1h-1zM0 7h1v1h-1zM8 14h1v1h-1zM11 7h1v1h-1zM0 4h1v1h-1zM0 10h1v1h-1zM11 10h1v1h-1zM10 14h1v1h-1zM2 4h1v1h-1zM0 13h1v1h-1zM11 13h1v1h-1zM7 0h1v1h-1zM1 14h1v1h-1zM7 3h1v1h-1zM6 7h1v1h-1zM7 6h1v1h-1zM5 8h1v1h-1zM3 5h1v1h-1zM5 2h1v1h-1zM3 14h1v1h-1zM8 4h1v1h-1zM5 11h1v1h-1zM0 0h1v1h-1zM5 14h1v1h-1zM10 4h1v1h-1zM8 1h1v1h-1zM0 3h1v1h-1zM2 0h1v1h-1zM0 9h1v1h-1zM11 9h1v1h-1zM0 6h1v1h-1zM0 12h1v1h-1zM11 6h1v1h-1zM11 12h1v1h-1zM6 0h1v1h-1zM6 6h1v1h-1zM7 5h1v1h-1zM6 3h1v1h-1zM7 14h1v1h-1z" fill="#000"/></svg>
<div class="t" style="left:25px;top:562.46px;transform:scaleX(0.9285);transform-origin:0 0;">authenticated/ayahtest.aspx</div>
<svg style="left:7px;top:583px" width="12" height="15" viewBox="0 0 12 15" shape-rendering="crispEdges"><path d="M4 0h1v1h-1zM9 2h1v1h-1zM0 2h1v1h-1zM0 5h1v1h-1zM9 14h1v1h-1zM1 0h1v1h-1zM10 3h1v1h-1zM0 8h1v1h-1zM0 14h1v1h-1zM11 14h1v1h-1zM11 5h1v1h-1zM0 11h1v1h-1zM11 8h1v1h-1zM2 14h1v1h-1zM11 11h1v1h-1zM7 4h1v1h-1zM7 1h1v1h-1zM6 14h1v1h-1zM3 0h1v1h-1zM5 0h1v1h-1zM4 14h1v1h-1zM11 4h1v1h-1zM9 4h1v1h-1zM0 1h1v1h-1zM0 7h1v1h-1zM8 14h1v1h-1zM11 7h1v1h-1zM0 4h1v1h-1zM0 10h1v1h-1zM11 10h1v1h-1zM10 14h1v1h-1zM0 13h1v1h-1zM11 13h1v1h-1zM7 0h1v1h-1zM1 14h1v1h-1zM7 3h1v1h-1zM3 14h1v1h-1zM8 4h1v1h-1zM0 0h1v1h-1zM5 14h1v1h-1zM10 4h1v1h-1zM8 1h1v1h-1zM0 3h1v1h-1zM2 0h1v1h-1zM0 9h1v1h-1zM11 9h1v1h-1zM0 6h1v1h-1zM0 12h1v1h-1zM11 6h1v1h-1zM11 12h1v1h-1zM7 2h1v1h-1zM6 0h1v1h-1zM7 14h1v1h-1z" fill="#000"/></svg>
<div class="t" style="left:25px;top:582.46px;transform:scaleX(0.9226);transform-origin:0 0;">authenticated/ayahtest.aspx.exclude</div>
<svg style="left:7px;top:603px" width="12" height="15" viewBox="0 0 12 15" shape-rendering="crispEdges"><path d="M4 0h1v1h-1zM3 4h1v1h-1zM4 3h1v1h-1zM4 9h1v1h-1zM4 12h1v1h-1zM9 2h1v1h-1zM5 7h1v1h-1zM0 2h1v1h-1zM0 5h1v1h-1zM9 14h1v1h-1zM1 0h1v1h-1zM10 3h1v1h-1zM0 8h1v1h-1zM0 14h1v1h-1zM11 14h1v1h-1zM11 5h1v1h-1zM0 11h1v1h-1zM11 8h1v1h-1zM2 14h1v1h-1zM11 11h1v1h-1zM6 2h1v1h-1zM7 4h1v1h-1zM2 5h1v1h-1zM6 14h1v1h-1zM4 2h1v1h-1zM3 0h1v1h-1zM3 3h1v1h-1zM5 0h1v1h-1zM4 8h1v1h-1zM4 14h1v1h-1zM5 3h1v1h-1zM5 9h1v1h-1zM4 11h1v1h-1zM11 4h1v1h-1zM8 5h1v1h-1zM5 12h1v1h-1zM0 1h1v1h-1zM0 7h1v1h-1zM8 14h1v1h-1zM11 7h1v1h-1zM0 4h1v1h-1zM0 10h1v1h-1zM11 10h1v1h-1zM10 14h1v1h-1zM2 4h1v1h-1zM0 13h1v1h-1zM11 13h1v1h-1zM7 0h1v1h-1zM1 14h1v1h-1zM7 3h1v1h-1zM6 7h1v1h-1zM7 6h1v1h-1zM5 8h1v1h-1zM3 5h1v1h-1zM5 2h1v1h-1zM3 14h1v1h-1zM8 4h1v1h-1zM5 11h1v1h-1zM0 0h1v1h-1zM5 14h1v1h-1zM10 4h1v1h-1zM8 1h1v1h-1zM0 3h1v1h-1zM2 0h1v1h-1zM0 9h1v1h-1zM11 9h1v1h-1zM0 6h1v1h-1zM0 12h1v1h-1zM11 6h1v1h-1zM11 12h1v1h-1zM6 0h1v1h-1zM6 6h1v1h-1zM7 5h1v1h-1zM6 3h1v1h-1zM7 14h1v1h-1z" fill="#000"/></svg>
<div class="t" style="left:25px;top:602.46px;transform:scaleX(0.9230);transform-origin:0 0;">authenticated/ayahtest.aspx.vb</div>
<svg style="left:7px;top:623px" width="12" height="15" viewBox="0 0 12 15" shape-rendering="crispEdges"><path d="M4 0h1v1h-1zM9 2h1v1h-1zM0 2h1v1h-1zM0 5h1v1h-1zM9 14h1v1h-1zM1 0h1v1h-1zM10 3h1v1h-1zM0 8h1v1h-1zM0 14h1v1h-1zM11 14h1v1h-1zM11 5h1v1h-1zM0 11h1v1h-1zM11 8h1v1h-1zM2 14h1v1h-1zM11 11h1v1h-1zM7 4h1v1h-1zM7 1h1v1h-1zM6 14h1v1h-1zM3 0h1v1h-1zM5 0h1v1h-1zM4 14h1v1h-1zM11 4h1v1h-1zM9 4h1v1h-1zM0 1h1v1h-1zM0 7h1v1h-1zM8 14h1v1h-1zM11 7h1v1h-1zM0 4h1v1h-1zM0 10h1v1h-1zM11 10h1v1h-1zM10 14h1v1h-1zM0 13h1v1h-1zM11 13h1v1h-1zM7 0h1v1h-1zM1 14h1v1h-1zM7 3h1v1h-1zM3 14h1v1h-1zM8 4h1v1h-1zM0 0h1v1h-1zM5 14h1v1h-1zM10 4h1v1h-1zM8 1h1v1h-1zM0 3h1v1h-1zM2 0h1v1h-1zM0 9h1v1h-1zM11 9h1v1h-1zM0 6h1v1h-1zM0 12h1v1h-1zM11 6h1v1h-1zM11 12h1v1h-1zM7 2h1v1h-1zM6 0h1v1h-1zM7 14h1v1h-1z" fill="#000"/></svg>
<div class="t" style="left:25px;top:622.46px;transform:scaleX(0.9187);transform-origin:0 0;">authenticated/ayahtest.aspx.vb.exclude</div>
<svg style="left:7px;top:643px" width="12" height="15" viewBox="0 0 12 15" shape-rendering="crispEdges"><path d="M4 0h1v1h-1zM5 10h1v1h-1zM9 8h1v1h-1zM0 5h1v1h-1zM2 2h1v1h-1zM11 5h1v1h-1zM0 14h1v1h-1zM11 14h1v1h-1zM7 1h1v1h-1zM7 10h1v1h-1zM4 2h1v1h-1zM3 6h1v1h-1zM5 12h1v1h-1zM9 10h1v1h-1zM0 7h1v1h-1zM11 7h1v1h-1zM2 4h1v1h-1zM7 3h1v1h-1zM7 12h1v1h-1zM3 8h1v1h-1zM8 4h1v1h-1zM0 0h1v1h-1zM5 14h1v1h-1zM9 12h1v1h-1zM0 9h1v1h-1zM11 9h1v1h-1zM6 6h1v1h-1zM7 14h1v1h-1zM3 10h1v1h-1zM0 2h1v1h-1zM9 14h1v1h-1zM5 0h1v1h-1zM3 12h1v1h-1zM11 4h1v1h-1zM7 0h1v1h-1zM1 14h1v1h-1zM5 2h1v1h-1zM4 4h1v1h-1zM3 14h1v1h-1zM2 6h1v1h-1zM7 2h1v1h-1zM5 4h1v1h-1zM4 6h1v1h-1zM9 2h1v1h-1zM8 6h1v1h-1zM10 3h1v1h-1zM1 0h1v1h-1zM0 11h1v1h-1zM11 11h1v1h-1zM2 8h1v1h-1zM7 4h1v1h-1zM6 8h1v1h-1zM3 0h1v1h-1zM5 6h1v1h-1zM4 8h1v1h-1zM8 8h1v1h-1zM0 4h1v1h-1zM10 14h1v1h-1zM0 13h1v1h-1zM11 13h1v1h-1zM2 10h1v1h-1zM6 10h1v1h-1zM3 2h1v1h-1zM4 10h1v1h-1zM8 1h1v1h-1zM8 10h1v1h-1zM0 6h1v1h-1zM11 6h1v1h-1zM2 12h1v1h-1zM6 12h1v1h-1zM3 4h1v1h-1zM4 12h1v1h-1zM8 12h1v1h-1zM0 8h1v1h-1zM11 8h1v1h-1zM2 14h1v1h-1zM6 14h1v1h-1zM4 14h1v1h-1zM9 4h1v1h-1zM0 1h1v1h-1zM8 14h1v1h-1zM0 10h1v1h-1zM11 10h1v1h-1zM7 6h1v1h-1zM5 8h1v1h-1zM10 4h1v1h-1zM9 6h1v1h-1zM0 3h1v1h-1zM2 0h1v1h-1zM0 12h1v1h-1zM11 12h1v1h-1zM6 0h1v1h-1zM7 8h1v1h-1z" fill="#0000ff"/></svg>
<div class="t" style="left:25px;top:642.46px;transform:scaleX(0.9342);transform-origin:0 0;">authenticated/blackjack.aspx</div>
<div class="a" style="left:1px;top:661px;width:353px;height:20px;background:#0078d7"></div>
<svg style="left:7px;top:663px" width="12" height="15" viewBox="0 0 12 15" shape-rendering="crispEdges"><rect x="0" y="0" width="12" height="15" fill="#fff"/><path d="M4 0h1v1h-1zM5 10h1v1h-1zM9 8h1v1h-1zM0 5h1v1h-1zM2 2h1v1h-1zM11 5h1v1h-1zM0 14h1v1h-1zM11 14h1v1h-1zM7 1h1v1h-1zM7 10h1v1h-1zM4 2h1v1h-1zM3 6h1v1h-1zM5 12h1v1h-1zM9 10h1v1h-1zM0 7h1v1h-1zM11 7h1v1h-1zM2 4h1v1h-1zM7 3h1v1h-1zM7 12h1v1h-1zM3 8h1v1h-1zM8 4h1v1h-1zM0 0h1v1h-1zM5 14h1v1h-1zM9 12h1v1h-1zM0 9h1v1h-1zM11 9h1v1h-1zM6 6h1v1h-1zM7 14h1v1h-1zM3 10h1v1h-1zM0 2h1v1h-1zM9 14h1v1h-1zM5 0h1v1h-1zM3 12h1v1h-1zM11 4h1v1h-1zM7 0h1v1h-1zM1 14h1v1h-1zM5 2h1v1h-1zM4 4h1v1h-1zM3 14h1v1h-1zM2 6h1v1h-1zM7 2h1v1h-1zM5 4h1v1h-1zM4 6h1v1h-1zM9 2h1v1h-1zM8 6h1v1h-1zM10 3h1v1h-1zM1 0h1v1h-1zM0 11h1v1h-1zM11 11h1v1h-1zM2 8h1v1h-1zM7 4h1v1h-1zM6 8h1v1h-1zM3 0h1v1h-1zM5 6h1v1h-1zM4 8h1v1h-1zM8 8h1v1h-1zM0 4h1v1h-1zM10 14h1v1h-1zM0 13h1v1h-1zM11 13h1v1h-1zM2 10h1v1h-1zM6 10h1v1h-1zM3 2h1v1h-1zM4 10h1v1h-1zM8 1h1v1h-1zM8 10h1v1h-1zM0 6h1v1h-1zM11 6h1v1h-1zM2 12h1v1h-1zM6 12h1v1h-1zM3 4h1v1h-1zM4 12h1v1h-1zM8 12h1v1h-1zM0 8h1v1h-1zM11 8h1v1h-1zM2 14h1v1h-1zM6 14h1v1h-1zM4 14h1v1h-1zM9 4h1v1h-1zM0 1h1v1h-1zM8 14h1v1h-1zM0 10h1v1h-1zM11 10h1v1h-1zM7 6h1v1h-1zM5 8h1v1h-1zM10 4h1v1h-1zM9 6h1v1h-1zM0 3h1v1h-1zM2 0h1v1h-1zM0 12h1v1h-1zM11 12h1v1h-1zM6 0h1v1h-1zM7 8h1v1h-1z" fill="#0000ff"/></svg>
<div class="t" style="left:25px;top:662.46px;transform:scaleX(0.9287);transform-origin:0 0;color:#fff;">authenticated/blackjack.aspx.vb</div>
<svg style="left:7px;top:683px" width="12" height="15" viewBox="0 0 12 15" shape-rendering="crispEdges"><path d="M4 0h1v1h-1zM5 10h1v1h-1zM9 8h1v1h-1zM0 5h1v1h-1zM2 2h1v1h-1zM11 5h1v1h-1zM0 14h1v1h-1zM11 14h1v1h-1zM7 1h1v1h-1zM7 10h1v1h-1zM4 2h1v1h-1zM3 6h1v1h-1zM5 12h1v1h-1zM9 10h1v1h-1zM0 7h1v1h-1zM11 7h1v1h-1zM2 4h1v1h-1zM7 3h1v1h-1zM7 12h1v1h-1zM3 8h1v1h-1zM8 4h1v1h-1zM0 0h1v1h-1zM5 14h1v1h-1zM9 12h1v1h-1zM0 9h1v1h-1zM11 9h1v1h-1zM6 6h1v1h-1zM7 14h1v1h-1zM3 10h1v1h-1zM0 2h1v1h-1zM9 14h1v1h-1zM5 0h1v1h-1zM3 12h1v1h-1zM11 4h1v1h-1zM7 0h1v1h-1zM1 14h1v1h-1zM5 2h1v1h-1zM4 4h1v1h-1zM3 14h1v1h-1zM2 6h1v1h-1zM7 2h1v1h-1zM5 4h1v1h-1zM4 6h1v1h-1zM9 2h1v1h-1zM8 6h1v1h-1zM10 3h1v1h-1zM1 0h1v1h-1zM0 11h1v1h-1zM11 11h1v1h-1zM2 8h1v1h-1zM7 4h1v1h-1zM6 8h1v1h-1zM3 0h1v1h-1zM5 6h1v1h-1zM4 8h1v1h-1zM8 8h1v1h-1zM0 4h1v1h-1zM10 14h1v1h-1zM0 13h1v1h-1zM11 13h1v1h-1zM2 10h1v1h-1zM6 10h1v1h-1zM3 2h1v1h-1zM4 10h1v1h-1zM8 1h1v1h-1zM8 10h1v1h-1zM0 6h1v1h-1zM11 6h1v1h-1zM2 12h1v1h-1zM6 12h1v1h-1zM3 4h1v1h-1zM4 12h1v1h-1zM8 12h1v1h-1zM0 8h1v1h-1zM11 8h1v1h-1zM2 14h1v1h-1zM6 14h1v1h-1zM4 14h1v1h-1zM9 4h1v1h-1zM0 1h1v1h-1zM8 14h1v1h-1zM0 10h1v1h-1zM11 10h1v1h-1zM7 6h1v1h-1zM5 8h1v1h-1zM10 4h1v1h-1zM9 6h1v1h-1zM0 3h1v1h-1zM2 0h1v1h-1zM0 12h1v1h-1zM11 12h1v1h-1zM6 0h1v1h-1zM7 8h1v1h-1z" fill="#0000ff"/></svg>
<div class="t" style="left:25px;top:682.46px;transform:scaleX(0.9203);transform-origin:0 0;">authenticated/css.master</div>
<svg style="left:7px;top:703px" width="12" height="15" viewBox="0 0 12 15" shape-rendering="crispEdges"><path d="M4 0h1v1h-1zM5 10h1v1h-1zM9 8h1v1h-1zM0 5h1v1h-1zM2 2h1v1h-1zM11 5h1v1h-1zM0 14h1v1h-1zM11 14h1v1h-1zM7 1h1v1h-1zM7 10h1v1h-1zM4 2h1v1h-1zM3 6h1v1h-1zM5 12h1v1h-1zM9 10h1v1h-1zM0 7h1v1h-1zM11 7h1v1h-1zM2 4h1v1h-1zM7 3h1v1h-1zM7 12h1v1h-1zM3 8h1v1h-1zM8 4h1v1h-1zM0 0h1v1h-1zM5 14h1v1h-1zM9 12h1v1h-1zM0 9h1v1h-1zM11 9h1v1h-1zM6 6h1v1h-1zM7 14h1v1h-1zM3 10h1v1h-1zM0 2h1v1h-1zM9 14h1v1h-1zM5 0h1v1h-1zM3 12h1v1h-1zM11 4h1v1h-1zM7 0h1v1h-1zM1 14h1v1h-1zM5 2h1v1h-1zM4 4h1v1h-1zM3 14h1v1h-1zM2 6h1v1h-1zM7 2h1v1h-1zM5 4h1v1h-1zM4 6h1v1h-1zM9 2h1v1h-1zM8 6h1v1h-1zM10 3h1v1h-1zM1 0h1v1h-1zM0 11h1v1h-1zM11 11h1v1h-1zM2 8h1v1h-1zM7 4h1v1h-1zM6 8h1v1h-1zM3 0h1v1h-1zM5 6h1v1h-1zM4 8h1v1h-1zM8 8h1v1h-1zM0 4h1v1h-1zM10 14h1v1h-1zM0 13h1v1h-1zM11 13h1v1h-1zM2 10h1v1h-1zM6 10h1v1h-1zM3 2h1v1h-1zM4 10h1v1h-1zM8 1h1v1h-1zM8 10h1v1h-1zM0 6h1v1h-1zM11 6h1v1h-1zM2 12h1v1h-1zM6 12h1v1h-1zM3 4h1v1h-1zM4 12h1v1h-1zM8 12h1v1h-1zM0 8h1v1h-1zM11 8h1v1h-1zM2 14h1v1h-1zM6 14h1v1h-1zM4 14h1v1h-1zM9 4h1v1h-1zM0 1h1v1h-1zM8 14h1v1h-1zM0 10h1v1h-1zM11 10h1v1h-1zM7 6h1v1h-1zM5 8h1v1h-1zM10 4h1v1h-1zM9 6h1v1h-1zM0 3h1v1h-1zM2 0h1v1h-1zM0 12h1v1h-1zM11 12h1v1h-1zM6 0h1v1h-1zM7 8h1v1h-1z" fill="#0000ff"/></svg>
<div class="t" style="left:25px;top:702.46px;transform:scaleX(0.9495);transform-origin:0 0;">authenticated/demo.master</div>
<svg style="left:7px;top:723px" width="12" height="15" viewBox="0 0 12 15" shape-rendering="crispEdges"><path d="M4 0h1v1h-1zM5 10h1v1h-1zM9 8h1v1h-1zM0 5h1v1h-1zM2 2h1v1h-1zM11 5h1v1h-1zM0 14h1v1h-1zM11 14h1v1h-1zM7 1h1v1h-1zM7 10h1v1h-1zM4 2h1v1h-1zM3 6h1v1h-1zM5 12h1v1h-1zM9 10h1v1h-1zM0 7h1v1h-1zM11 7h1v1h-1zM2 4h1v1h-1zM7 3h1v1h-1zM7 12h1v1h-1zM3 8h1v1h-1zM8 4h1v1h-1zM0 0h1v1h-1zM5 14h1v1h-1zM9 12h1v1h-1zM0 9h1v1h-1zM11 9h1v1h-1zM6 6h1v1h-1zM7 14h1v1h-1zM3 10h1v1h-1zM0 2h1v1h-1zM9 14h1v1h-1zM5 0h1v1h-1zM3 12h1v1h-1zM11 4h1v1h-1zM7 0h1v1h-1zM1 14h1v1h-1zM5 2h1v1h-1zM4 4h1v1h-1zM3 14h1v1h-1zM2 6h1v1h-1zM7 2h1v1h-1zM5 4h1v1h-1zM4 6h1v1h-1zM9 2h1v1h-1zM8 6h1v1h-1zM10 3h1v1h-1zM1 0h1v1h-1zM0 11h1v1h-1zM11 11h1v1h-1zM2 8h1v1h-1zM7 4h1v1h-1zM6 8h1v1h-1zM3 0h1v1h-1zM5 6h1v1h-1zM4 8h1v1h-1zM8 8h1v1h-1zM0 4h1v1h-1zM10 14h1v1h-1zM0 13h1v1h-1zM11 13h1v1h-1zM2 10h1v1h-1zM6 10h1v1h-1zM3 2h1v1h-1zM4 10h1v1h-1zM8 1h1v1h-1zM8 10h1v1h-1zM0 6h1v1h-1zM11 6h1v1h-1zM2 12h1v1h-1zM6 12h1v1h-1zM3 4h1v1h-1zM4 12h1v1h-1zM8 12h1v1h-1zM0 8h1v1h-1zM11 8h1v1h-1zM2 14h1v1h-1zM6 14h1v1h-1zM4 14h1v1h-1zM9 4h1v1h-1zM0 1h1v1h-1zM8 14h1v1h-1zM0 10h1v1h-1zM11 10h1v1h-1zM7 6h1v1h-1zM5 8h1v1h-1zM10 4h1v1h-1zM9 6h1v1h-1zM0 3h1v1h-1zM2 0h1v1h-1zM0 12h1v1h-1zM11 12h1v1h-1zM6 0h1v1h-1zM7 8h1v1h-1z" fill="#0000ff"/></svg>
<div class="t" style="left:25px;top:722.46px;transform:scaleX(0.9491);transform-origin:0 0;">authenticated/doubleup.aspx</div>
<svg style="left:7px;top:743px" width="12" height="15" viewBox="0 0 12 15" shape-rendering="crispEdges"><path d="M4 0h1v1h-1zM5 10h1v1h-1zM9 8h1v1h-1zM0 5h1v1h-1zM2 2h1v1h-1zM11 5h1v1h-1zM0 14h1v1h-1zM11 14h1v1h-1zM7 1h1v1h-1zM7 10h1v1h-1zM4 2h1v1h-1zM3 6h1v1h-1zM5 12h1v1h-1zM9 10h1v1h-1zM0 7h1v1h-1zM11 7h1v1h-1zM2 4h1v1h-1zM7 3h1v1h-1zM7 12h1v1h-1zM3 8h1v1h-1zM8 4h1v1h-1zM0 0h1v1h-1zM5 14h1v1h-1zM9 12h1v1h-1zM0 9h1v1h-1zM11 9h1v1h-1zM6 6h1v1h-1zM7 14h1v1h-1zM3 10h1v1h-1zM0 2h1v1h-1zM9 14h1v1h-1zM5 0h1v1h-1zM3 12h1v1h-1zM11 4h1v1h-1zM7 0h1v1h-1zM1 14h1v1h-1zM5 2h1v1h-1zM4 4h1v1h-1zM3 14h1v1h-1zM2 6h1v1h-1zM7 2h1v1h-1zM5 4h1v1h-1zM4 6h1v1h-1zM9 2h1v1h-1zM8 6h1v1h-1zM10 3h1v1h-1zM1 0h1v1h-1zM0 11h1v1h-1zM11 11h1v1h-1zM2 8h1v1h-1zM7 4h1v1h-1zM6 8h1v1h-1zM3 0h1v1h-1zM5 6h1v1h-1zM4 8h1v1h-1zM8 8h1v1h-1zM0 4h1v1h-1zM10 14h1v1h-1zM0 13h1v1h-1zM11 13h1v1h-1zM2 10h1v1h-1zM6 10h1v1h-1zM3 2h1v1h-1zM4 10h1v1h-1zM8 1h1v1h-1zM8 10h1v1h-1zM0 6h1v1h-1zM11 6h1v1h-1zM2 12h1v1h-1zM6 12h1v1h-1zM3 4h1v1h-1zM4 12h1v1h-1zM8 12h1v1h-1zM0 8h1v1h-1zM11 8h1v1h-1zM2 14h1v1h-1zM6 14h1v1h-1zM4 14h1v1h-1zM9 4h1v1h-1zM0 1h1v1h-1zM8 14h1v1h-1zM0 10h1v1h-1zM11 10h1v1h-1zM7 6h1v1h-1zM5 8h1v1h-1zM10 4h1v1h-1zM9 6h1v1h-1zM0 3h1v1h-1zM2 0h1v1h-1zM0 12h1v1h-1zM11 12h1v1h-1zM6 0h1v1h-1zM7 8h1v1h-1z" fill="#0000ff"/></svg>
<div class="t" style="left:25px;top:742.46px;transform:scaleX(0.9547);transform-origin:0 0;">authenticated/mobile.master</div>
<svg style="left:7px;top:763px" width="12" height="15" viewBox="0 0 12 15" shape-rendering="crispEdges"><path d="M4 0h1v1h-1zM5 10h1v1h-1zM9 8h1v1h-1zM0 5h1v1h-1zM2 2h1v1h-1zM11 5h1v1h-1zM0 14h1v1h-1zM11 14h1v1h-1zM7 1h1v1h-1zM7 10h1v1h-1zM4 2h1v1h-1zM3 6h1v1h-1zM5 12h1v1h-1zM9 10h1v1h-1zM0 7h1v1h-1zM11 7h1v1h-1zM2 4h1v1h-1zM7 3h1v1h-1zM7 12h1v1h-1zM3 8h1v1h-1zM8 4h1v1h-1zM0 0h1v1h-1zM5 14h1v1h-1zM9 12h1v1h-1zM0 9h1v1h-1zM11 9h1v1h-1zM6 6h1v1h-1zM7 14h1v1h-1zM3 10h1v1h-1zM0 2h1v1h-1zM9 14h1v1h-1zM5 0h1v1h-1zM3 12h1v1h-1zM11 4h1v1h-1zM7 0h1v1h-1zM1 14h1v1h-1zM5 2h1v1h-1zM4 4h1v1h-1zM3 14h1v1h-1zM2 6h1v1h-1zM7 2h1v1h-1zM5 4h1v1h-1zM4 6h1v1h-1zM9 2h1v1h-1zM8 6h1v1h-1zM10 3h1v1h-1zM1 0h1v1h-1zM0 11h1v1h-1zM11 11h1v1h-1zM2 8h1v1h-1zM7 4h1v1h-1zM6 8h1v1h-1zM3 0h1v1h-1zM5 6h1v1h-1zM4 8h1v1h-1zM8 8h1v1h-1zM0 4h1v1h-1zM10 14h1v1h-1zM0 13h1v1h-1zM11 13h1v1h-1zM2 10h1v1h-1zM6 10h1v1h-1zM3 2h1v1h-1zM4 10h1v1h-1zM8 1h1v1h-1zM8 10h1v1h-1zM0 6h1v1h-1zM11 6h1v1h-1zM2 12h1v1h-1zM6 12h1v1h-1zM3 4h1v1h-1zM4 12h1v1h-1zM8 12h1v1h-1zM0 8h1v1h-1zM11 8h1v1h-1zM2 14h1v1h-1zM6 14h1v1h-1zM4 14h1v1h-1zM9 4h1v1h-1zM0 1h1v1h-1zM8 14h1v1h-1zM0 10h1v1h-1zM11 10h1v1h-1zM7 6h1v1h-1zM5 8h1v1h-1zM10 4h1v1h-1zM9 6h1v1h-1zM0 3h1v1h-1zM2 0h1v1h-1zM0 12h1v1h-1zM11 12h1v1h-1zM6 0h1v1h-1zM7 8h1v1h-1z" fill="#0000ff"/></svg>
<div class="t" style="left:25px;top:762.46px;transform:scaleX(0.9338);transform-origin:0 0;">authenticated/personal.aspx</div>
<svg style="left:7px;top:783px" width="12" height="15" viewBox="0 0 12 15" shape-rendering="crispEdges"><path d="M4 0h1v1h-1zM5 10h1v1h-1zM9 8h1v1h-1zM0 5h1v1h-1zM2 2h1v1h-1zM11 5h1v1h-1zM0 14h1v1h-1zM11 14h1v1h-1zM7 1h1v1h-1zM7 10h1v1h-1zM4 2h1v1h-1zM3 6h1v1h-1zM5 12h1v1h-1zM9 10h1v1h-1zM0 7h1v1h-1zM11 7h1v1h-1zM2 4h1v1h-1zM7 3h1v1h-1zM7 12h1v1h-1zM3 8h1v1h-1zM8 4h1v1h-1zM0 0h1v1h-1zM5 14h1v1h-1zM9 12h1v1h-1zM0 9h1v1h-1zM11 9h1v1h-1zM6 6h1v1h-1zM7 14h1v1h-1zM3 10h1v1h-1zM0 2h1v1h-1zM9 14h1v1h-1zM5 0h1v1h-1zM3 12h1v1h-1zM11 4h1v1h-1zM7 0h1v1h-1zM1 14h1v1h-1zM5 2h1v1h-1zM4 4h1v1h-1zM3 14h1v1h-1zM2 6h1v1h-1zM7 2h1v1h-1zM5 4h1v1h-1zM4 6h1v1h-1zM9 2h1v1h-1zM8 6h1v1h-1zM10 3h1v1h-1zM1 0h1v1h-1zM0 11h1v1h-1zM11 11h1v1h-1zM2 8h1v1h-1zM7 4h1v1h-1zM6 8h1v1h-1zM3 0h1v1h-1zM5 6h1v1h-1zM4 8h1v1h-1zM8 8h1v1h-1zM0 4h1v1h-1zM10 14h1v1h-1zM0 13h1v1h-1zM11 13h1v1h-1zM2 10h1v1h-1zM6 10h1v1h-1zM3 2h1v1h-1zM4 10h1v1h-1zM8 1h1v1h-1zM8 10h1v1h-1zM0 6h1v1h-1zM11 6h1v1h-1zM2 12h1v1h-1zM6 12h1v1h-1zM3 4h1v1h-1zM4 12h1v1h-1zM8 12h1v1h-1zM0 8h1v1h-1zM11 8h1v1h-1zM2 14h1v1h-1zM6 14h1v1h-1zM4 14h1v1h-1zM9 4h1v1h-1zM0 1h1v1h-1zM8 14h1v1h-1zM0 10h1v1h-1zM11 10h1v1h-1zM7 6h1v1h-1zM5 8h1v1h-1zM10 4h1v1h-1zM9 6h1v1h-1zM0 3h1v1h-1zM2 0h1v1h-1zM0 12h1v1h-1zM11 12h1v1h-1zM6 0h1v1h-1zM7 8h1v1h-1z" fill="#0000ff"/></svg>
<div class="t" style="left:25px;top:782.46px;transform:scaleX(0.9456);transform-origin:0 0;">authenticated/profile.aspx.vb</div>
<svg style="left:7px;top:803px" width="12" height="15" viewBox="0 0 12 15" shape-rendering="crispEdges"><path d="M4 0h1v1h-1zM3 4h1v1h-1zM4 3h1v1h-1zM4 9h1v1h-1zM4 12h1v1h-1zM9 2h1v1h-1zM5 7h1v1h-1zM0 2h1v1h-1zM0 5h1v1h-1zM9 14h1v1h-1zM1 0h1v1h-1zM10 3h1v1h-1zM0 8h1v1h-1zM0 14h1v1h-1zM11 14h1v1h-1zM11 5h1v1h-1zM0 11h1v1h-1zM11 8h1v1h-1zM2 14h1v1h-1zM11 11h1v1h-1zM6 2h1v1h-1zM7 4h1v1h-1zM2 5h1v1h-1zM6 14h1v1h-1zM4 2h1v1h-1zM3 0h1v1h-1zM3 3h1v1h-1zM5 0h1v1h-1zM4 8h1v1h-1zM4 14h1v1h-1zM5 3h1v1h-1zM5 9h1v1h-1zM4 11h1v1h-1zM11 4h1v1h-1zM8 5h1v1h-1zM5 12h1v1h-1zM0 1h1v1h-1zM0 7h1v1h-1zM8 14h1v1h-1zM11 7h1v1h-1zM0 4h1v1h-1zM0 10h1v1h-1zM11 10h1v1h-1zM10 14h1v1h-1zM2 4h1v1h-1zM0 13h1v1h-1zM11 13h1v1h-1zM7 0h1v1h-1zM1 14h1v1h-1zM7 3h1v1h-1zM6 7h1v1h-1zM7 6h1v1h-1zM5 8h1v1h-1zM3 5h1v1h-1zM5 2h1v1h-1zM3 14h1v1h-1zM8 4h1v1h-1zM5 11h1v1h-1zM0 0h1v1h-1zM5 14h1v1h-1zM10 4h1v1h-1zM8 1h1v1h-1zM0 3h1v1h-1zM2 0h1v1h-1zM0 9h1v1h-1zM11 9h1v1h-1zM0 6h1v1h-1zM0 12h1v1h-1zM11 6h1v1h-1zM11 12h1v1h-1zM6 0h1v1h-1zM6 6h1v1h-1zM7 5h1v1h-1zM6 3h1v1h-1zM7 14h1v1h-1z" fill="#000"/></svg>
<div class="t" style="left:25px;top:802.46px;transform:scaleX(0.9278);transform-origin:0 0;">authenticated/resetScriptCounter.aspx</div>
<svg style="left:7px;top:823px" width="12" height="15" viewBox="0 0 12 15" shape-rendering="crispEdges"><path d="M4 0h1v1h-1zM9 2h1v1h-1zM0 2h1v1h-1zM0 5h1v1h-1zM9 14h1v1h-1zM1 0h1v1h-1zM10 3h1v1h-1zM0 8h1v1h-1zM0 14h1v1h-1zM11 14h1v1h-1zM11 5h1v1h-1zM0 11h1v1h-1zM11 8h1v1h-1zM2 14h1v1h-1zM11 11h1v1h-1zM7 4h1v1h-1zM7 1h1v1h-1zM6 14h1v1h-1zM3 0h1v1h-1zM5 0h1v1h-1zM4 14h1v1h-1zM11 4h1v1h-1zM9 4h1v1h-1zM0 1h1v1h-1zM0 7h1v1h-1zM8 14h1v1h-1zM11 7h1v1h-1zM0 4h1v1h-1zM0 10h1v1h-1zM11 10h1v1h-1zM10 14h1v1h-1zM0 13h1v1h-1zM11 13h1v1h-1zM7 0h1v1h-1zM1 14h1v1h-1zM7 3h1v1h-1zM3 14h1v1h-1zM8 4h1v1h-1zM0 0h1v1h-1zM5 14h1v1h-1zM10 4h1v1h-1zM8 1h1v1h-1zM0 3h1v1h-1zM2 0h1v1h-1zM0 9h1v1h-1zM11 9h1v1h-1zM0 6h1v1h-1zM0 12h1v1h-1zM11 6h1v1h-1zM11 12h1v1h-1zM7 2h1v1h-1zM6 0h1v1h-1zM7 14h1v1h-1z" fill="#000"/></svg>
<div class="t" style="left:25px;top:822.46px;transform:scaleX(0.9236);transform-origin:0 0;">authenticated/resetScriptCounter.aspx.exclude</div>
<svg style="left:7px;top:843px" width="12" height="15" viewBox="0 0 12 15" shape-rendering="crispEdges"><path d="M4 0h1v1h-1zM3 4h1v1h-1zM4 3h1v1h-1zM4 9h1v1h-1zM4 12h1v1h-1zM9 2h1v1h-1zM5 7h1v1h-1zM0 2h1v1h-1zM0 5h1v1h-1zM9 14h1v1h-1zM1 0h1v1h-1zM10 3h1v1h-1zM0 8h1v1h-1zM0 14h1v1h-1zM11 14h1v1h-1zM11 5h1v1h-1zM0 11h1v1h-1zM11 8h1v1h-1zM2 14h1v1h-1zM11 11h1v1h-1zM6 2h1v1h-1zM7 4h1v1h-1zM2 5h1v1h-1zM6 14h1v1h-1zM4 2h1v1h-1zM3 0h1v1h-1zM3 3h1v1h-1zM5 0h1v1h-1zM4 8h1v1h-1zM4 14h1v1h-1zM5 3h1v1h-1zM5 9h1v1h-1zM4 11h1v1h-1zM11 4h1v1h-1zM8 5h1v1h-1zM5 12h1v1h-1zM0 1h1v1h-1zM0 7h1v1h-1zM8 14h1v1h-1zM11 7h1v1h-1zM0 4h1v1h-1zM0 10h1v1h-1zM11 10h1v1h-1zM10 14h1v1h-1zM2 4h1v1h-1zM0 13h1v1h-1zM11 13h1v1h-1zM7 0h1v1h-1zM1 14h1v1h-1zM7 3h1v1h-1zM6 7h1v1h-1zM7 6h1v1h-1zM5 8h1v1h-1zM3 5h1v1h-1zM5 2h1v1h-1zM3 14h1v1h-1zM8 4h1v1h-1zM5 11h1v1h-1zM0 0h1v1h-1zM5 14h1v1h-1zM10 4h1v1h-1zM8 1h1v1h-1zM0 3h1v1h-1zM2 0h1v1h-1zM0 9h1v1h-1zM11 9h1v1h-1zM0 6h1v1h-1zM0 12h1v1h-1zM11 6h1v1h-1zM11 12h1v1h-1zM6 0h1v1h-1zM6 6h1v1h-1zM7 5h1v1h-1zM6 3h1v1h-1zM7 14h1v1h-1z" fill="#000"/></svg>
<div class="t" style="left:25px;top:842.46px;transform:scaleX(0.9254);transform-origin:0 0;">authenticated/resetScriptCounter.aspx.vb</div>
<svg style="left:7px;top:863px" width="12" height="15" viewBox="0 0 12 15" shape-rendering="crispEdges"><path d="M4 0h1v1h-1zM9 2h1v1h-1zM0 2h1v1h-1zM0 5h1v1h-1zM9 14h1v1h-1zM1 0h1v1h-1zM10 3h1v1h-1zM0 8h1v1h-1zM0 14h1v1h-1zM11 14h1v1h-1zM11 5h1v1h-1zM0 11h1v1h-1zM11 8h1v1h-1zM2 14h1v1h-1zM11 11h1v1h-1zM7 4h1v1h-1zM7 1h1v1h-1zM6 14h1v1h-1zM3 0h1v1h-1zM5 0h1v1h-1zM4 14h1v1h-1zM11 4h1v1h-1zM9 4h1v1h-1zM0 1h1v1h-1zM0 7h1v1h-1zM8 14h1v1h-1zM11 7h1v1h-1zM0 4h1v1h-1zM0 10h1v1h-1zM11 10h1v1h-1zM10 14h1v1h-1zM0 13h1v1h-1zM11 13h1v1h-1zM7 0h1v1h-1zM1 14h1v1h-1zM7 3h1v1h-1zM3 14h1v1h-1zM8 4h1v1h-1zM0 0h1v1h-1zM5 14h1v1h-1zM10 4h1v1h-1zM8 1h1v1h-1zM0 3h1v1h-1zM2 0h1v1h-1zM0 9h1v1h-1zM11 9h1v1h-1zM0 6h1v1h-1zM0 12h1v1h-1zM11 6h1v1h-1zM11 12h1v1h-1zM7 2h1v1h-1zM6 0h1v1h-1zM7 14h1v1h-1z" fill="#000"/></svg>
<div class="t" style="left:25px;top:862.46px;transform:scaleX(0.9239);transform-origin:0 0;">authenticated/resetScriptCounter.aspx.vb.exclude</div>
<svg style="left:7px;top:883px" width="12" height="15" viewBox="0 0 12 15" shape-rendering="crispEdges"><path d="M4 0h1v1h-1zM3 4h1v1h-1zM4 3h1v1h-1zM4 9h1v1h-1zM4 12h1v1h-1zM9 2h1v1h-1zM5 7h1v1h-1zM0 2h1v1h-1zM0 5h1v1h-1zM9 14h1v1h-1zM1 0h1v1h-1zM10 3h1v1h-1zM0 8h1v1h-1zM0 14h1v1h-1zM11 14h1v1h-1zM11 5h1v1h-1zM0 11h1v1h-1zM11 8h1v1h-1zM2 14h1v1h-1zM11 11h1v1h-1zM6 2h1v1h-1zM7 4h1v1h-1zM2 5h1v1h-1zM6 14h1v1h-1zM4 2h1v1h-1zM3 0h1v1h-1zM3 3h1v1h-1zM5 0h1v1h-1zM4 8h1v1h-1zM4 14h1v1h-1zM5 3h1v1h-1zM5 9h1v1h-1zM4 11h1v1h-1zM11 4h1v1h-1zM8 5h1v1h-1zM5 12h1v1h-1zM0 1h1v1h-1zM0 7h1v1h-1zM8 14h1v1h-1zM11 7h1v1h-1zM0 4h1v1h-1zM0 10h1v1h-1zM11 10h1v1h-1zM10 14h1v1h-1zM2 4h1v1h-1zM0 13h1v1h-1zM11 13h1v1h-1zM7 0h1v1h-1zM1 14h1v1h-1zM7 3h1v1h-1zM6 7h1v1h-1zM7 6h1v1h-1zM5 8h1v1h-1zM3 5h1v1h-1zM5 2h1v1h-1zM3 14h1v1h-1zM8 4h1v1h-1zM5 11h1v1h-1zM0 0h1v1h-1zM5 14h1v1h-1zM10 4h1v1h-1zM8 1h1v1h-1zM0 3h1v1h-1zM2 0h1v1h-1zM0 9h1v1h-1zM11 9h1v1h-1zM0 6h1v1h-1zM0 12h1v1h-1zM11 6h1v1h-1zM11 12h1v1h-1zM6 0h1v1h-1zM6 6h1v1h-1zM7 5h1v1h-1zM6 3h1v1h-1zM7 14h1v1h-1z" fill="#000"/></svg>
<div class="t" style="left:25px;top:882.46px;transform:scaleX(0.9383);transform-origin:0 0;">js/jquery.js</div>
<svg style="left:7px;top:903px" width="12" height="15" viewBox="0 0 12 15" shape-rendering="crispEdges"><path d="M4 0h1v1h-1zM5 10h1v1h-1zM9 8h1v1h-1zM0 5h1v1h-1zM2 2h1v1h-1zM11 5h1v1h-1zM0 14h1v1h-1zM11 14h1v1h-1zM7 1h1v1h-1zM7 10h1v1h-1zM4 2h1v1h-1zM3 6h1v1h-1zM5 12h1v1h-1zM9 10h1v1h-1zM0 7h1v1h-1zM11 7h1v1h-1zM2 4h1v1h-1zM7 3h1v1h-1zM7 12h1v1h-1zM3 8h1v1h-1zM8 4h1v1h-1zM0 0h1v1h-1zM5 14h1v1h-1zM9 12h1v1h-1zM0 9h1v1h-1zM11 9h1v1h-1zM6 6h1v1h-1zM7 14h1v1h-1zM3 10h1v1h-1zM0 2h1v1h-1zM9 14h1v1h-1zM5 0h1v1h-1zM3 12h1v1h-1zM11 4h1v1h-1zM7 0h1v1h-1zM1 14h1v1h-1zM5 2h1v1h-1zM4 4h1v1h-1zM3 14h1v1h-1zM2 6h1v1h-1zM7 2h1v1h-1zM5 4h1v1h-1zM4 6h1v1h-1zM9 2h1v1h-1zM8 6h1v1h-1zM10 3h1v1h-1zM1 0h1v1h-1zM0 11h1v1h-1zM11 11h1v1h-1zM2 8h1v1h-1zM7 4h1v1h-1zM6 8h1v1h-1zM3 0h1v1h-1zM5 6h1v1h-1zM4 8h1v1h-1zM8 8h1v1h-1zM0 4h1v1h-1zM10 14h1v1h-1zM0 13h1v1h-1zM11 13h1v1h-1zM2 10h1v1h-1zM6 10h1v1h-1zM3 2h1v1h-1zM4 10h1v1h-1zM8 1h1v1h-1zM8 10h1v1h-1zM0 6h1v1h-1zM11 6h1v1h-1zM2 12h1v1h-1zM6 12h1v1h-1zM3 4h1v1h-1zM4 12h1v1h-1zM8 12h1v1h-1zM0 8h1v1h-1zM11 8h1v1h-1zM2 14h1v1h-1zM6 14h1v1h-1zM4 14h1v1h-1zM9 4h1v1h-1zM0 1h1v1h-1zM8 14h1v1h-1zM0 10h1v1h-1zM11 10h1v1h-1zM7 6h1v1h-1zM5 8h1v1h-1zM10 4h1v1h-1zM9 6h1v1h-1zM0 3h1v1h-1zM2 0h1v1h-1zM0 12h1v1h-1zM11 12h1v1h-1zM6 0h1v1h-1zM7 8h1v1h-1z" fill="#0000ff"/></svg>
<div class="t" style="left:25px;top:902.46px;transform:scaleX(0.9313);transform-origin:0 0;">login.aspx</div>
<svg style="left:7px;top:923px" width="12" height="15" viewBox="0 0 12 15" shape-rendering="crispEdges"><path d="M4 0h1v1h-1zM5 10h1v1h-1zM9 8h1v1h-1zM0 5h1v1h-1zM2 2h1v1h-1zM11 5h1v1h-1zM0 14h1v1h-1zM11 14h1v1h-1zM7 1h1v1h-1zM7 10h1v1h-1zM4 2h1v1h-1zM3 6h1v1h-1zM5 12h1v1h-1zM9 10h1v1h-1zM0 7h1v1h-1zM11 7h1v1h-1zM2 4h1v1h-1zM7 3h1v1h-1zM7 12h1v1h-1zM3 8h1v1h-1zM8 4h1v1h-1zM0 0h1v1h-1zM5 14h1v1h-1zM9 12h1v1h-1zM0 9h1v1h-1zM11 9h1v1h-1zM6 6h1v1h-1zM7 14h1v1h-1zM3 10h1v1h-1zM0 2h1v1h-1zM9 14h1v1h-1zM5 0h1v1h-1zM3 12h1v1h-1zM11 4h1v1h-1zM7 0h1v1h-1zM1 14h1v1h-1zM5 2h1v1h-1zM4 4h1v1h-1zM3 14h1v1h-1zM2 6h1v1h-1zM7 2h1v1h-1zM5 4h1v1h-1zM4 6h1v1h-1zM9 2h1v1h-1zM8 6h1v1h-1zM10 3h1v1h-1zM1 0h1v1h-1zM0 11h1v1h-1zM11 11h1v1h-1zM2 8h1v1h-1zM7 4h1v1h-1zM6 8h1v1h-1zM3 0h1v1h-1zM5 6h1v1h-1zM4 8h1v1h-1zM8 8h1v1h-1zM0 4h1v1h-1zM10 14h1v1h-1zM0 13h1v1h-1zM11 13h1v1h-1zM2 10h1v1h-1zM6 10h1v1h-1zM3 2h1v1h-1zM4 10h1v1h-1zM8 1h1v1h-1zM8 10h1v1h-1zM0 6h1v1h-1zM11 6h1v1h-1zM2 12h1v1h-1zM6 12h1v1h-1zM3 4h1v1h-1zM4 12h1v1h-1zM8 12h1v1h-1zM0 8h1v1h-1zM11 8h1v1h-1zM2 14h1v1h-1zM6 14h1v1h-1zM4 14h1v1h-1zM9 4h1v1h-1zM0 1h1v1h-1zM8 14h1v1h-1zM0 10h1v1h-1zM11 10h1v1h-1zM7 6h1v1h-1zM5 8h1v1h-1zM10 4h1v1h-1zM9 6h1v1h-1zM0 3h1v1h-1zM2 0h1v1h-1zM0 12h1v1h-1zM11 12h1v1h-1zM6 0h1v1h-1zM7 8h1v1h-1z" fill="#0000ff"/></svg>
<div class="t" style="left:25px;top:922.46px;transform:scaleX(0.9155);transform-origin:0 0;">login.aspx.vb</div>
<svg style="left:7px;top:943px" width="12" height="15" viewBox="0 0 12 15" shape-rendering="crispEdges"><path d="M4 0h1v1h-1zM5 10h1v1h-1zM9 8h1v1h-1zM0 5h1v1h-1zM2 2h1v1h-1zM11 5h1v1h-1zM0 14h1v1h-1zM11 14h1v1h-1zM7 1h1v1h-1zM7 10h1v1h-1zM4 2h1v1h-1zM3 6h1v1h-1zM5 12h1v1h-1zM9 10h1v1h-1zM0 7h1v1h-1zM11 7h1v1h-1zM2 4h1v1h-1zM7 3h1v1h-1zM7 12h1v1h-1zM3 8h1v1h-1zM8 4h1v1h-1zM0 0h1v1h-1zM5 14h1v1h-1zM9 12h1v1h-1zM0 9h1v1h-1zM11 9h1v1h-1zM6 6h1v1h-1zM7 14h1v1h-1zM3 10h1v1h-1zM0 2h1v1h-1zM9 14h1v1h-1zM5 0h1v1h-1zM3 12h1v1h-1zM11 4h1v1h-1zM7 0h1v1h-1zM1 14h1v1h-1zM5 2h1v1h-1zM4 4h1v1h-1zM3 14h1v1h-1zM2 6h1v1h-1zM7 2h1v1h-1zM5 4h1v1h-1zM4 6h1v1h-1zM9 2h1v1h-1zM8 6h1v1h-1zM10 3h1v1h-1zM1 0h1v1h-1zM0 11h1v1h-1zM11 11h1v1h-1zM2 8h1v1h-1zM7 4h1v1h-1zM6 8h1v1h-1zM3 0h1v1h-1zM5 6h1v1h-1zM4 8h1v1h-1zM8 8h1v1h-1zM0 4h1v1h-1zM10 14h1v1h-1zM0 13h1v1h-1zM11 13h1v1h-1zM2 10h1v1h-1zM6 10h1v1h-1zM3 2h1v1h-1zM4 10h1v1h-1zM8 1h1v1h-1zM8 10h1v1h-1zM0 6h1v1h-1zM11 6h1v1h-1zM2 12h1v1h-1zM6 12h1v1h-1zM3 4h1v1h-1zM4 12h1v1h-1zM8 12h1v1h-1zM0 8h1v1h-1zM11 8h1v1h-1zM2 14h1v1h-1zM6 14h1v1h-1zM4 14h1v1h-1zM9 4h1v1h-1zM0 1h1v1h-1zM8 14h1v1h-1zM0 10h1v1h-1zM11 10h1v1h-1zM7 6h1v1h-1zM5 8h1v1h-1zM10 4h1v1h-1zM9 6h1v1h-1zM0 3h1v1h-1zM2 0h1v1h-1zM0 12h1v1h-1zM11 12h1v1h-1zM6 0h1v1h-1zM7 8h1v1h-1z" fill="#0000ff"/></svg>
<div class="t" style="left:25px;top:942.46px;transform:scaleX(0.9447);transform-origin:0 0;">portal.master</div>
<svg style="left:7px;top:963px" width="12" height="15" viewBox="0 0 12 15" shape-rendering="crispEdges"><path d="M4 0h1v1h-1zM5 10h1v1h-1zM9 8h1v1h-1zM0 5h1v1h-1zM2 2h1v1h-1zM11 5h1v1h-1zM0 14h1v1h-1zM11 14h1v1h-1zM7 1h1v1h-1zM7 10h1v1h-1zM4 2h1v1h-1zM3 6h1v1h-1zM5 12h1v1h-1zM9 10h1v1h-1zM0 7h1v1h-1zM11 7h1v1h-1zM2 4h1v1h-1zM7 3h1v1h-1zM7 12h1v1h-1zM3 8h1v1h-1zM8 4h1v1h-1zM0 0h1v1h-1zM5 14h1v1h-1zM9 12h1v1h-1zM0 9h1v1h-1zM11 9h1v1h-1zM6 6h1v1h-1zM7 14h1v1h-1zM3 10h1v1h-1zM0 2h1v1h-1zM9 14h1v1h-1zM5 0h1v1h-1zM3 12h1v1h-1zM11 4h1v1h-1zM7 0h1v1h-1zM1 14h1v1h-1zM5 2h1v1h-1zM4 4h1v1h-1zM3 14h1v1h-1zM2 6h1v1h-1zM7 2h1v1h-1zM5 4h1v1h-1zM4 6h1v1h-1zM9 2h1v1h-1zM8 6h1v1h-1zM10 3h1v1h-1zM1 0h1v1h-1zM0 11h1v1h-1zM11 11h1v1h-1zM2 8h1v1h-1zM7 4h1v1h-1zM6 8h1v1h-1zM3 0h1v1h-1zM5 6h1v1h-1zM4 8h1v1h-1zM8 8h1v1h-1zM0 4h1v1h-1zM10 14h1v1h-1zM0 13h1v1h-1zM11 13h1v1h-1zM2 10h1v1h-1zM6 10h1v1h-1zM3 2h1v1h-1zM4 10h1v1h-1zM8 1h1v1h-1zM8 10h1v1h-1zM0 6h1v1h-1zM11 6h1v1h-1zM2 12h1v1h-1zM6 12h1v1h-1zM3 4h1v1h-1zM4 12h1v1h-1zM8 12h1v1h-1zM0 8h1v1h-1zM11 8h1v1h-1zM2 14h1v1h-1zM6 14h1v1h-1zM4 14h1v1h-1zM9 4h1v1h-1zM0 1h1v1h-1zM8 14h1v1h-1zM0 10h1v1h-1zM11 10h1v1h-1zM7 6h1v1h-1zM5 8h1v1h-1zM10 4h1v1h-1zM9 6h1v1h-1zM0 3h1v1h-1zM2 0h1v1h-1zM0 12h1v1h-1zM11 12h1v1h-1zM6 0h1v1h-1zM7 8h1v1h-1z" fill="#0000ff"/></svg>
<div class="t" style="left:25px;top:962.46px;transform:scaleX(0.9284);transform-origin:0 0;">pwremind.aspx</div>
<svg style="left:7px;top:983px" width="12" height="15" viewBox="0 0 12 15" shape-rendering="crispEdges"><path d="M4 0h1v1h-1zM5 10h1v1h-1zM9 8h1v1h-1zM0 5h1v1h-1zM2 2h1v1h-1zM11 5h1v1h-1zM0 14h1v1h-1zM11 14h1v1h-1zM7 1h1v1h-1zM7 10h1v1h-1zM4 2h1v1h-1zM3 6h1v1h-1zM5 12h1v1h-1zM9 10h1v1h-1zM0 7h1v1h-1zM11 7h1v1h-1zM2 4h1v1h-1zM7 3h1v1h-1zM7 12h1v1h-1zM3 8h1v1h-1zM8 4h1v1h-1zM0 0h1v1h-1zM5 14h1v1h-1zM9 12h1v1h-1zM0 9h1v1h-1zM11 9h1v1h-1zM6 6h1v1h-1zM7 14h1v1h-1zM3 10h1v1h-1zM0 2h1v1h-1zM9 14h1v1h-1zM5 0h1v1h-1zM3 12h1v1h-1zM11 4h1v1h-1zM7 0h1v1h-1zM1 14h1v1h-1zM5 2h1v1h-1zM4 4h1v1h-1zM3 14h1v1h-1zM2 6h1v1h-1zM7 2h1v1h-1zM5 4h1v1h-1zM4 6h1v1h-1zM9 2h1v1h-1zM8 6h1v1h-1zM10 3h1v1h-1zM1 0h1v1h-1zM0 11h1v1h-1zM11 11h1v1h-1zM2 8h1v1h-1zM7 4h1v1h-1zM6 8h1v1h-1zM3 0h1v1h-1zM5 6h1v1h-1zM4 8h1v1h-1zM8 8h1v1h-1zM0 4h1v1h-1zM10 14h1v1h-1zM0 13h1v1h-1zM11 13h1v1h-1zM2 10h1v1h-1zM6 10h1v1h-1zM3 2h1v1h-1zM4 10h1v1h-1zM8 1h1v1h-1zM8 10h1v1h-1zM0 6h1v1h-1zM11 6h1v1h-1zM2 12h1v1h-1zM6 12h1v1h-1zM3 4h1v1h-1zM4 12h1v1h-1zM8 12h1v1h-1zM0 8h1v1h-1zM11 8h1v1h-1zM2 14h1v1h-1zM6 14h1v1h-1zM4 14h1v1h-1zM9 4h1v1h-1zM0 1h1v1h-1zM8 14h1v1h-1zM0 10h1v1h-1zM11 10h1v1h-1zM7 6h1v1h-1zM5 8h1v1h-1zM10 4h1v1h-1zM9 6h1v1h-1zM0 3h1v1h-1zM2 0h1v1h-1zM0 12h1v1h-1zM11 12h1v1h-1zM6 0h1v1h-1zM7 8h1v1h-1z" fill="#0000ff"/></svg>
<div class="t" style="left:25px;top:982.46px;transform:scaleX(0.9150);transform-origin:0 0;">register.aspx</div>
<svg style="left:7px;top:1003px" width="12" height="15" viewBox="0 0 12 15" shape-rendering="crispEdges"><path d="M4 0h1v1h-1zM5 10h1v1h-1zM9 8h1v1h-1zM0 5h1v1h-1zM2 2h1v1h-1zM11 5h1v1h-1zM0 14h1v1h-1zM11 14h1v1h-1zM7 1h1v1h-1zM7 10h1v1h-1zM4 2h1v1h-1zM3 6h1v1h-1zM5 12h1v1h-1zM9 10h1v1h-1zM0 7h1v1h-1zM11 7h1v1h-1zM2 4h1v1h-1zM7 3h1v1h-1zM7 12h1v1h-1zM3 8h1v1h-1zM8 4h1v1h-1zM0 0h1v1h-1zM5 14h1v1h-1zM9 12h1v1h-1zM0 9h1v1h-1zM11 9h1v1h-1zM6 6h1v1h-1zM7 14h1v1h-1zM3 10h1v1h-1zM0 2h1v1h-1zM9 14h1v1h-1zM5 0h1v1h-1zM3 12h1v1h-1zM11 4h1v1h-1zM7 0h1v1h-1zM1 14h1v1h-1zM5 2h1v1h-1zM4 4h1v1h-1zM3 14h1v1h-1zM2 6h1v1h-1zM7 2h1v1h-1zM5 4h1v1h-1zM4 6h1v1h-1zM9 2h1v1h-1zM8 6h1v1h-1zM10 3h1v1h-1zM1 0h1v1h-1zM0 11h1v1h-1zM11 11h1v1h-1zM2 8h1v1h-1zM7 4h1v1h-1zM6 8h1v1h-1zM3 0h1v1h-1zM5 6h1v1h-1zM4 8h1v1h-1zM8 8h1v1h-1zM0 4h1v1h-1zM10 14h1v1h-1zM0 13h1v1h-1zM11 13h1v1h-1zM2 10h1v1h-1zM6 10h1v1h-1zM3 2h1v1h-1zM4 10h1v1h-1zM8 1h1v1h-1zM8 10h1v1h-1zM0 6h1v1h-1zM11 6h1v1h-1zM2 12h1v1h-1zM6 12h1v1h-1zM3 4h1v1h-1zM4 12h1v1h-1zM8 12h1v1h-1zM0 8h1v1h-1zM11 8h1v1h-1zM2 14h1v1h-1zM6 14h1v1h-1zM4 14h1v1h-1zM9 4h1v1h-1zM0 1h1v1h-1zM8 14h1v1h-1zM0 10h1v1h-1zM11 10h1v1h-1zM7 6h1v1h-1zM5 8h1v1h-1zM10 4h1v1h-1zM9 6h1v1h-1zM0 3h1v1h-1zM2 0h1v1h-1zM0 12h1v1h-1zM11 12h1v1h-1zM6 0h1v1h-1zM7 8h1v1h-1z" fill="#0000ff"/></svg>
<div class="t" style="left:25px;top:1002.46px;transform:scaleX(0.9058);transform-origin:0 0;">register.aspx.vb</div>
<svg style="left:7px;top:1023px" width="12" height="15" viewBox="0 0 12 15" shape-rendering="crispEdges"><path d="M4 0h1v1h-1zM3 4h1v1h-1zM4 3h1v1h-1zM4 9h1v1h-1zM4 12h1v1h-1zM9 2h1v1h-1zM5 7h1v1h-1zM0 2h1v1h-1zM0 5h1v1h-1zM9 14h1v1h-1zM1 0h1v1h-1zM10 3h1v1h-1zM0 8h1v1h-1zM0 14h1v1h-1zM11 14h1v1h-1zM11 5h1v1h-1zM0 11h1v1h-1zM11 8h1v1h-1zM2 14h1v1h-1zM11 11h1v1h-1zM6 2h1v1h-1zM7 4h1v1h-1zM2 5h1v1h-1zM6 14h1v1h-1zM4 2h1v1h-1zM3 0h1v1h-1zM3 3h1v1h-1zM5 0h1v1h-1zM4 8h1v1h-1zM4 14h1v1h-1zM5 3h1v1h-1zM5 9h1v1h-1zM4 11h1v1h-1zM11 4h1v1h-1zM8 5h1v1h-1zM5 12h1v1h-1zM0 1h1v1h-1zM0 7h1v1h-1zM8 14h1v1h-1zM11 7h1v1h-1zM0 4h1v1h-1zM0 10h1v1h-1zM11 10h1v1h-1zM10 14h1v1h-1zM2 4h1v1h-1zM0 13h1v1h-1zM11 13h1v1h-1zM7 0h1v1h-1zM1 14h1v1h-1zM7 3h1v1h-1zM6 7h1v1h-1zM7 6h1v1h-1zM5 8h1v1h-1zM3 5h1v1h-1zM5 2h1v1h-1zM3 14h1v1h-1zM8 4h1v1h-1zM5 11h1v1h-1zM0 0h1v1h-1zM5 14h1v1h-1zM10 4h1v1h-1zM8 1h1v1h-1zM0 3h1v1h-1zM2 0h1v1h-1zM0 9h1v1h-1zM11 9h1v1h-1zM0 6h1v1h-1zM0 12h1v1h-1zM11 6h1v1h-1zM11 12h1v1h-1zM6 0h1v1h-1zM6 6h1v1h-1zM7 5h1v1h-1zM6 3h1v1h-1zM7 14h1v1h-1z" fill="#000"/></svg>
<div class="t" style="left:25px;top:1022.46px;transform:scaleX(0.9036);transform-origin:0 0;">register2.aspx</div>
<svg style="left:7px;top:1043px" width="12" height="15" viewBox="0 0 12 15" shape-rendering="crispEdges"><path d="M4 0h1v1h-1zM9 2h1v1h-1zM0 2h1v1h-1zM0 5h1v1h-1zM9 14h1v1h-1zM1 0h1v1h-1zM10 3h1v1h-1zM0 8h1v1h-1zM0 14h1v1h-1zM11 14h1v1h-1zM11 5h1v1h-1zM0 11h1v1h-1zM11 8h1v1h-1zM2 14h1v1h-1zM11 11h1v1h-1zM7 4h1v1h-1zM7 1h1v1h-1zM6 14h1v1h-1zM3 0h1v1h-1zM5 0h1v1h-1zM4 14h1v1h-1zM11 4h1v1h-1zM9 4h1v1h-1zM0 1h1v1h-1zM0 7h1v1h-1zM8 14h1v1h-1zM11 7h1v1h-1zM0 4h1v1h-1zM0 10h1v1h-1zM11 10h1v1h-1zM10 14h1v1h-1zM0 13h1v1h-1zM11 13h1v1h-1zM7 0h1v1h-1zM1 14h1v1h-1zM7 3h1v1h-1zM3 14h1v1h-1zM8 4h1v1h-1zM0 0h1v1h-1zM5 14h1v1h-1zM10 4h1v1h-1zM8 1h1v1h-1zM0 3h1v1h-1zM2 0h1v1h-1zM0 9h1v1h-1zM11 9h1v1h-1zM0 6h1v1h-1zM0 12h1v1h-1zM11 6h1v1h-1zM11 12h1v1h-1zM7 2h1v1h-1zM6 0h1v1h-1zM7 14h1v1h-1z" fill="#000"/></svg>
<div class="t" style="left:25px;top:1042.46px;transform:scaleX(0.9033);transform-origin:0 0;">register2.aspx.exclude</div>
<svg style="left:7px;top:1063px" width="12" height="15" viewBox="0 0 12 15" shape-rendering="crispEdges"><path d="M4 0h1v1h-1zM3 4h1v1h-1zM4 3h1v1h-1zM4 9h1v1h-1zM4 12h1v1h-1zM9 2h1v1h-1zM5 7h1v1h-1zM0 2h1v1h-1zM0 5h1v1h-1zM9 14h1v1h-1zM1 0h1v1h-1zM10 3h1v1h-1zM0 8h1v1h-1zM0 14h1v1h-1zM11 14h1v1h-1zM11 5h1v1h-1zM0 11h1v1h-1zM11 8h1v1h-1zM2 14h1v1h-1zM11 11h1v1h-1zM6 2h1v1h-1zM7 4h1v1h-1zM2 5h1v1h-1zM6 14h1v1h-1zM4 2h1v1h-1zM3 0h1v1h-1zM3 3h1v1h-1zM5 0h1v1h-1zM4 8h1v1h-1zM4 14h1v1h-1zM5 3h1v1h-1zM5 9h1v1h-1zM4 11h1v1h-1zM11 4h1v1h-1zM8 5h1v1h-1zM5 12h1v1h-1zM0 1h1v1h-1zM0 7h1v1h-1zM8 14h1v1h-1zM11 7h1v1h-1zM0 4h1v1h-1zM0 10h1v1h-1zM11 10h1v1h-1zM10 14h1v1h-1zM2 4h1v1h-1zM0 13h1v1h-1zM11 13h1v1h-1zM7 0h1v1h-1zM1 14h1v1h-1zM7 3h1v1h-1zM6 7h1v1h-1zM7 6h1v1h-1zM5 8h1v1h-1zM3 5h1v1h-1zM5 2h1v1h-1zM3 14h1v1h-1zM8 4h1v1h-1zM5 11h1v1h-1zM0 0h1v1h-1zM5 14h1v1h-1zM10 4h1v1h-1zM8 1h1v1h-1zM0 3h1v1h-1zM2 0h1v1h-1zM0 9h1v1h-1zM11 9h1v1h-1zM0 6h1v1h-1zM0 12h1v1h-1zM11 6h1v1h-1zM11 12h1v1h-1zM6 0h1v1h-1zM6 6h1v1h-1zM7 5h1v1h-1zM6 3h1v1h-1zM7 14h1v1h-1z" fill="#000"/></svg>
<div class="t" style="left:25px;top:1062.46px;transform:scaleX(0.8996);transform-origin:0 0;">register2.aspx.vb</div>
<svg style="left:7px;top:1083px" width="12" height="15" viewBox="0 0 12 15" shape-rendering="crispEdges"><path d="M4 0h1v1h-1zM9 2h1v1h-1zM0 2h1v1h-1zM0 5h1v1h-1zM9 14h1v1h-1zM1 0h1v1h-1zM10 3h1v1h-1zM0 8h1v1h-1zM0 14h1v1h-1zM11 14h1v1h-1zM11 5h1v1h-1zM0 11h1v1h-1zM11 8h1v1h-1zM2 14h1v1h-1zM11 11h1v1h-1zM7 4h1v1h-1zM7 1h1v1h-1zM6 14h1v1h-1zM3 0h1v1h-1zM5 0h1v1h-1zM4 14h1v1h-1zM11 4h1v1h-1zM9 4h1v1h-1zM0 1h1v1h-1zM0 7h1v1h-1zM8 14h1v1h-1zM11 7h1v1h-1zM0 4h1v1h-1zM0 10h1v1h-1zM11 10h1v1h-1zM10 14h1v1h-1zM0 13h1v1h-1zM11 13h1v1h-1zM7 0h1v1h-1zM1 14h1v1h-1zM7 3h1v1h-1zM3 14h1v1h-1zM8 4h1v1h-1zM0 0h1v1h-1zM5 14h1v1h-1zM10 4h1v1h-1zM8 1h1v1h-1zM0 3h1v1h-1zM2 0h1v1h-1zM0 9h1v1h-1zM11 9h1v1h-1zM0 6h1v1h-1zM0 12h1v1h-1zM11 6h1v1h-1zM11 12h1v1h-1zM7 2h1v1h-1zM6 0h1v1h-1zM7 14h1v1h-1z" fill="#000"/></svg>
<div class="t" style="left:25px;top:1082.46px;transform:scaleX(0.9023);transform-origin:0 0;">register2.aspx.vb.exclude</div>
<svg style="left:7px;top:1103px" width="12" height="15" viewBox="0 0 12 15" shape-rendering="crispEdges"><path d="M4 0h1v1h-1zM5 10h1v1h-1zM9 8h1v1h-1zM0 5h1v1h-1zM2 2h1v1h-1zM11 5h1v1h-1zM0 14h1v1h-1zM11 14h1v1h-1zM7 1h1v1h-1zM7 10h1v1h-1zM4 2h1v1h-1zM3 6h1v1h-1zM5 12h1v1h-1zM9 10h1v1h-1zM0 7h1v1h-1zM11 7h1v1h-1zM2 4h1v1h-1zM7 3h1v1h-1zM7 12h1v1h-1zM3 8h1v1h-1zM8 4h1v1h-1zM0 0h1v1h-1zM5 14h1v1h-1zM9 12h1v1h-1zM0 9h1v1h-1zM11 9h1v1h-1zM6 6h1v1h-1zM7 14h1v1h-1zM3 10h1v1h-1zM0 2h1v1h-1zM9 14h1v1h-1zM5 0h1v1h-1zM3 12h1v1h-1zM11 4h1v1h-1zM7 0h1v1h-1zM1 14h1v1h-1zM5 2h1v1h-1zM4 4h1v1h-1zM3 14h1v1h-1zM2 6h1v1h-1zM7 2h1v1h-1zM5 4h1v1h-1zM4 6h1v1h-1zM9 2h1v1h-1zM8 6h1v1h-1zM10 3h1v1h-1zM1 0h1v1h-1zM0 11h1v1h-1zM11 11h1v1h-1zM2 8h1v1h-1zM7 4h1v1h-1zM6 8h1v1h-1zM3 0h1v1h-1zM5 6h1v1h-1zM4 8h1v1h-1zM8 8h1v1h-1zM0 4h1v1h-1zM10 14h1v1h-1zM0 13h1v1h-1zM11 13h1v1h-1zM2 10h1v1h-1zM6 10h1v1h-1zM3 2h1v1h-1zM4 10h1v1h-1zM8 1h1v1h-1zM8 10h1v1h-1zM0 6h1v1h-1zM11 6h1v1h-1zM2 12h1v1h-1zM6 12h1v1h-1zM3 4h1v1h-1zM4 12h1v1h-1zM8 12h1v1h-1zM0 8h1v1h-1zM11 8h1v1h-1zM2 14h1v1h-1zM6 14h1v1h-1zM4 14h1v1h-1zM9 4h1v1h-1zM0 1h1v1h-1zM8 14h1v1h-1zM0 10h1v1h-1zM11 10h1v1h-1zM7 6h1v1h-1zM5 8h1v1h-1zM10 4h1v1h-1zM9 6h1v1h-1zM0 3h1v1h-1zM2 0h1v1h-1zM0 12h1v1h-1zM11 12h1v1h-1zM6 0h1v1h-1zM7 8h1v1h-1z" fill="#0000ff"/></svg>
<div class="t" style="left:25px;top:1102.46px;transform:scaleX(0.9465);transform-origin:0 0;">web.config</div>
<svg style="left:7px;top:1123px" width="12" height="15" viewBox="0 0 12 15" shape-rendering="crispEdges"><path d="M4 0h1v1h-1zM9 2h1v1h-1zM0 2h1v1h-1zM0 5h1v1h-1zM9 14h1v1h-1zM1 0h1v1h-1zM10 3h1v1h-1zM0 8h1v1h-1zM0 14h1v1h-1zM11 14h1v1h-1zM11 5h1v1h-1zM0 11h1v1h-1zM11 8h1v1h-1zM2 14h1v1h-1zM11 11h1v1h-1zM7 4h1v1h-1zM7 1h1v1h-1zM6 14h1v1h-1zM3 0h1v1h-1zM5 0h1v1h-1zM4 14h1v1h-1zM11 4h1v1h-1zM9 4h1v1h-1zM0 1h1v1h-1zM0 7h1v1h-1zM8 14h1v1h-1zM11 7h1v1h-1zM0 4h1v1h-1zM0 10h1v1h-1zM11 10h1v1h-1zM10 14h1v1h-1zM0 13h1v1h-1zM11 13h1v1h-1zM7 0h1v1h-1zM1 14h1v1h-1zM7 3h1v1h-1zM3 14h1v1h-1zM8 4h1v1h-1zM0 0h1v1h-1zM5 14h1v1h-1zM10 4h1v1h-1zM8 1h1v1h-1zM0 3h1v1h-1zM2 0h1v1h-1zM0 9h1v1h-1zM11 9h1v1h-1zM0 6h1v1h-1zM0 12h1v1h-1zM11 6h1v1h-1zM11 12h1v1h-1zM7 2h1v1h-1zM6 0h1v1h-1zM7 14h1v1h-1z" fill="#000"/></svg>
<div class="t" style="left:25px;top:1122.46px;transform:scaleX(0.9458);transform-origin:0 0;">website.publishproj</div>
</div>
<div class="a" style="left:358px;top:108px;width:20px;height:1138px;background:#f0f0f0"></div>
<div class="a" style="left:366px;top:129px;width:3px;height:1072px;background:#858585;border-radius:2px"></div>
<div class="a" style="left:2px;top:1247px;width:376px;height:20px;background:#f0f0f0"></div>
<div class="a" style="left:23px;top:1255px;width:322px;height:3px;background:#858585;border-radius:2px"></div>
<div class="a" style="left:1px;top:1268px;width:378px;height:1px;background:#8a8a8a"></div>
<div class="a" style="left:1px;top:1275px;width:378px;height:81px;background:#fff"></div>
<div class="a" style="left:2px;top:1276px;width:376px;height:28px;background:#90ee90"></div>
<div class="t" style="left:5.50px;top:1281.46px;transform:scaleX(0.9289);transform-origin:0 0;">Staged Changes (Will Commit)</div>
<div class="a" style="left:358px;top:1304px;width:20px;height:29px;background:#f0f0f0"></div>
<svg style="left:0;top:0" width="2560" height="1440"><clipPath id="c358_1304"><rect x="358" y="1304" width="20" height="29"/></clipPath><g clip-path="url(#c358_1304)"><polygon points="363.5,1317.5 367.5,1311.5 371.5,1317.5" fill="#a0a0a0" stroke="#a0a0a0" stroke-width="1.4" stroke-linejoin="round"/><polygon points="363.5,1329.5 367.5,1335.5 371.5,1329.5" fill="#a0a0a0" stroke="#a0a0a0" stroke-width="1.4" stroke-linejoin="round"/></g></svg>
<div class="a" style="left:2px;top:1334px;width:376px;height:20px;background:#f0f0f0"></div>
<svg style="left:0;top:0" width="2560" height="1440"><polygon points="14.5,1339.5 8.5,1343.5 14.5,1347.5" fill="#a0a0a0" stroke="#a0a0a0" stroke-width="1.4" stroke-linejoin="round"/><polygon points="364.5,1339.5 370.5,1343.5 364.5,1347.5" fill="#a0a0a0" stroke="#a0a0a0" stroke-width="1.4" stroke-linejoin="round"/></svg>
<div class="a" style="left:1px;top:1355px;width:378px;height:1px;background:#8a8a8a"></div>
<div class="a" style="left:385px;top:78px;width:2175px;height:1040px;background:#fff"></div>
<div class="a" style="left:385px;top:78px;width:2174px;height:1039px;border-left:1px solid #8a8a8a;border-top:1px solid #8a8a8a;border-bottom:1px solid #8a8a8a;background:#fff"></div>
<div class="a" style="left:386px;top:79px;width:2173px;height:28px;background:#ffd700"></div>
<div class="t" style="left:390.00px;top:84.46px;transform:scaleX(0.9716);transform-origin:0 0;">Modified, not staged</div>
<div class="t" style="left:782.00px;top:84.46px;transform:scaleX(0.8602);transform-origin:0 0;">File:</div>
<div class="t" style="left:816.00px;top:84.46px;transform:scaleX(0.9296);transform-origin:0 0;color:#0000ff;text-decoration:underline">authenticated/blackjack.aspx.vb</div>
<div class="a" style="left:386px;top:107px;width:2151px;height:988px;overflow:hidden"><div class="a mono" style="left:3.5px;top:4px"><div style="color:#00a000;height:20px">+</div><div style="color:#00a000;height:20px">+    Private Property CapturePasses() As Boolean</div><div style="color:#00a000;height:20px">+        Get</div><div style="color:#00a000;height:20px">+            If Session(&quot;CapturePasses&quot;) Is Nothing Then</div><div style="color:#00a000;height:20px">+                Session(&quot;CapturePasses&quot;) = False</div><div style="color:#00a000;height:20px">+            End If</div><div style="color:#00a000;height:20px">+            Return Session(&quot;CapturePasses&quot;)</div><div style="color:#00a000;height:20px">+        End Get</div><div style="color:#00a000;height:20px">+        Set(ByVal value As Boolean)</div><div style="color:#00a000;height:20px">+            Session(&quot;CapturePasses&quot;) = value</div><div style="color:#00a000;height:20px">+        End Set</div><div style="color:#00a000;height:20px">+    End Property</div><div style="color:#00a000;height:20px">+</div><div style="color:#000;height:20px">     Private Property BlackJackGame() As BlackJack</div><div style="color:#000;height:20px">         Get</div><div style="color:#000;height:20px">             Return Session(&quot;BlackJackGame&quot;)</div><div style="color:#000;height:20px">         End Get</div><div style="color:#000;height:20px">         Set(ByVal value As BlackJack)</div><div style="height:20px;font-weight:bold;-webkit-text-stroke:0"><span style="color:#00868b">@@ -13,10 +28,33 @@</span> Partial Class authenticated_blackjack</div><div style="color:#000;height:20px">     Protected Sub Page_PreInit(sender As Object, e As System.EventArgs) Handles Me.PreInit</div><div style="color:#000;height:20px">         TMNCore.masterPageSelection(Page)</div><div style="color:#000;height:20px">     End Sub</div><div style="color:#000;height:20px"> </div><div style="color:#000;height:20px">     Protected Sub Page_Load(sender As Object, e As System.EventArgs) Handles Me.Load</div><div style="color:#00a000;height:20px">+        Dim previousUrl As String = If(Request.UrlReferrer IsNot Nothing, Request.UrlReferrer.ToString(), &quot;&quot;)</div><div style="color:#00a000;height:20px">+        If Not String.IsNullOrEmpty(previousUrl) AndAlso Not previousUrl.Contains(Request.Url.AbsolutePath) Then</div><div style="color:#00a000;height:20px">+            Me.CapturePasses = False</div><div style="color:#00a000;height:20px">+        End If</div><div style="color:#00a000;height:20px">+</div><div style="color:#00a000;height:20px">+        Debug.Print(CapturePasses)</div><div style="color:#00a000;height:20px">+        For Each key As String In Request.Form.Keys</div><div style="color:#00a000;height:20px">+            Debug.Print(key)</div><div style="color:#00a000;height:20px">+            If key.Contains(&quot;ScriptTest$btnVerify&quot;) Then</div><div style="color:#00a000;height:20px">+                myScriptTest.btnVerify_Click(Nothing, Nothing)</div><div style="color:#00a000;height:20px">+            End If</div><div style="color:#00a000;height:20px">+        Next</div><div style="color:#00a000;height:20px">+        Debug.Print(CapturePasses)</div><div style="color:#00a000;height:20px">+        If Not CapturePasses Then</div><div style="color:#00a000;height:20px">+            pnlVerify.Visible = True</div><div style="color:#00a000;height:20px">+            pnlBJContainer.Visible = False</div><div style="color:#00a000;height:20px">+            pnlBlackJack.Visible = False</div><div style="color:#00a000;height:20px">+            pnlTakeOver.Visible = False</div><div style="color:#00a000;height:20px">+            pnlOwner.Visible = False</div><div style="color:#00a000;height:20px">+            OwnerPanel.Visible = False</div><div style="color:#00a000;height:20px">+            myScriptTest.GenerateCode()</div><div style="color:#00a000;height:20px">+            Exit Sub</div><div style="color:#00a000;height:20px">+        End If</div><div style="color:#000;height:20px"> </div><div style="color:#000;height:20px">         TMNCore.limitedAccess()</div></div></div>
<div class="a" style="left:2537px;top:108px;width:21px;height:986px;background:#f0f0f0"></div>
<div class="a" style="left:2545px;top:162px;width:3px;height:291px;background:#858585;border-radius:2px"></div>
<div class="a" style="left:386px;top:1095px;width:2171px;height:20px;background:#f0f0f0"></div>
<svg style="left:0;top:0" width="2560" height="1440"><polygon points="400.5,1100.5 394.5,1104.5 400.5,1108.5" fill="#a0a0a0" stroke="#a0a0a0" stroke-width="1.4" stroke-linejoin="round"/><polygon points="2543.5,1100.5 2549.5,1104.5 2543.5,1108.5" fill="#a0a0a0" stroke="#a0a0a0" stroke-width="1.4" stroke-linejoin="round"/></svg>
<div class="t" style="left:497.50px;top:1127.46px;transform:scaleX(0.9230);transform-origin:0 0;">Commit Message:</div>
<div class="a" style="left:1114px;top:1128px;width:16px;height:16px;border:1.3px solid #555;border-radius:3px;background:#fff"></div>
<div class="t" style="left:1135.00px;top:1127.46px;transform:scaleX(0.9314);transform-origin:0 0;">Amend Last Commit</div>
<div class="btn" style="top:1149px"></div>
<div class="t" style="left:417.50px;top:1152.96px;transform:scaleX(0.8479);transform-origin:0 0;">Rescan</div>
<div class="btn" style="top:1179px"></div>
<div class="t" style="left:390.00px;top:1182.96px;transform:scaleX(0.9082);transform-origin:0 0;">Stage Changed</div>
<div class="btn" style="top:1209px"></div>
<div class="t" style="left:413.50px;top:1212.96px;transform:scaleX(0.9389);transform-origin:0 0;">Sign Off</div>
<div class="btn" style="top:1239px"></div>
<div class="t" style="left:414.00px;top:1242.96px;transform:scaleX(0.9617);transform-origin:0 0;">Commit</div>
<div class="btn" style="top:1269px"></div>
<div class="t" style="left:425.50px;top:1272.96px;transform:scaleX(0.8226);transform-origin:0 0;">Push</div>
<div class="a" style="left:497px;top:1150px;width:776px;height:206px;background:#fff;border-right:1px solid #e0e0e0"></div>
<div class="a" style="left:1251px;top:1150px;width:20px;height:183px;background:#f0f0f0"></div>
<svg style="left:0;top:0" width="2560" height="1440"><polygon points="1256.5,1164.5 1260.5,1158.5 1264.5,1164.5" fill="#a0a0a0" stroke="#a0a0a0" stroke-width="1.4" stroke-linejoin="round"/><polygon points="1256.5,1319.5 1260.5,1325.5 1264.5,1319.5" fill="#a0a0a0" stroke="#a0a0a0" stroke-width="1.4" stroke-linejoin="round"/></svg>
<div class="a" style="left:497px;top:1334px;width:774px;height:20px;background:#f0f0f0"></div>
<svg style="left:0;top:0" width="2560" height="1440"><polygon points="510.5,1339.5 504.5,1343.5 510.5,1347.5" fill="#a0a0a0" stroke="#a0a0a0" stroke-width="1.4" stroke-linejoin="round"/><polygon points="1257.5,1339.5 1263.5,1343.5 1257.5,1347.5" fill="#a0a0a0" stroke="#a0a0a0" stroke-width="1.4" stroke-linejoin="round"/></svg>
<div class="a" style="left:497px;top:1355px;width:776px;height:1px;background:#8a8a8a"></div>
<div class="t" style="left:2.00px;top:1359.46px;transform:scaleX(0.8887);transform-origin:0 0;">Ready.</div>
<div class="a" style="left:2458px;top:1360px;width:102px;height:16px;border-left:1px solid #a0a0a0;border-top:1px solid #a0a0a0"></div>
<svg style="left:1598px;top:926px" width="8" height="20" shape-rendering="crispEdges"><path d="M0 0h3v2H0zM5 0h3v2H5zM3 2h2v17H3zM0 19h3v1H0zM5 19h3v1H5z" fill="#000"/></svg>
<div class="a" style="left:0;top:1380px;width:2560px;height:60px;background:#dadada;border-top:1px solid #aaaaaa"></div>
<svg width="0" height="0" style="position:absolute"><defs>
<linearGradient id="gwin" x1="0" y1="0" x2="1" y2="1"><stop offset="0" stop-color="#4cc9fb"/><stop offset="1" stop-color="#0066cc"/></linearGradient>
<linearGradient id="gfold" x1="0" y1="0" x2="0" y2="1"><stop offset="0" stop-color="#ffd860"/><stop offset="1" stop-color="#f5b400"/></linearGradient>
<linearGradient id="gff" x1="0" y1="0" x2="1" y2="1"><stop offset="0" stop-color="#ffbd2e"/><stop offset="0.5" stop-color="#ff6a2e"/><stop offset="1" stop-color="#e3157a"/></linearGradient>
<linearGradient id="gvs" x1="0" y1="0" x2="1" y2="0"><stop offset="0" stop-color="#6c4aa8"/><stop offset="1" stop-color="#c79bff"/></linearGradient>
<linearGradient id="gnpp" x1="0" y1="0" x2="0" y2="1"><stop offset="0" stop-color="#f4f4f4"/><stop offset="0.45" stop-color="#e0f0c0"/><stop offset="1" stop-color="#3cb018"/></linearGradient>
<linearGradient id="gmr" x1="0" y1="0" x2="0" y2="1"><stop offset="0" stop-color="#000"/><stop offset="0.5" stop-color="#333"/><stop offset="1" stop-color="#111"/></linearGradient>
</defs></svg><div class="a" style="left:1613px;top:1386px;width:43px;height:48px;background:#f2f2f2;border-radius:5px;box-shadow:3px 0 0 -1px #e8e8e8"></div><svg style="left:25.5px;top:1395px" width="30" height="30" viewBox="0 0 30 30"><defs><linearGradient id="gw2" gradientUnits="userSpaceOnUse" x1="0" y1="0" x2="30" y2="30"><stop offset="0" stop-color="#52d0ff"/><stop offset="0.5" stop-color="#1a98e8"/><stop offset="1" stop-color="#0668cc"/></linearGradient></defs><g fill="url(#gw2)"><rect x="0.5" y="1" width="14" height="14" rx="1.5"/><rect x="15.5" y="1" width="14" height="14" rx="1.5"/><rect x="0.5" y="16" width="14" height="14" rx="1.5"/><rect x="15.5" y="16" width="14" height="14" rx="1.5"/></g></svg><svg style="left:81.0px;top:1395px" width="30" height="30" viewBox="0 0 30 30"><rect x="1" y="9" width="22" height="20" rx="1.5" fill="#262626"/><rect x="8" y="1" width="22" height="19" rx="1" fill="#f7f7f7"/><rect x="8" y="9" width="15" height="11" fill="#bdbdbd"/></svg><svg style="left:137.0px;top:1395px" width="30" height="30" viewBox="0 0 30 30"><path d="M1 3h9l2 2h17v23H1z" fill="#e0a200"/><rect x="1" y="6" width="29" height="22" rx="1" fill="url(#gfold)"/><rect x="6" y="19" width="19" height="10" rx="2" fill="#0f78d4"/><rect x="10" y="22" width="11" height="1" fill="#06407a"/></svg><svg style="left:191.5px;top:1395px" width="30" height="30" viewBox="0 0 30 30"><circle cx="15" cy="15" r="13.5" fill="#eeeeee" stroke="#8a9396" stroke-width="2"/><circle cx="15" cy="15" r="10" fill="#f5f5f5" stroke="#ddd"/><path d="M9 7L20 20" stroke="#d42020" stroke-width="2.2"/><path d="M22 12a8 8 0 0 1 0 7" stroke="#e07020" stroke-width="2" fill="none"/></svg><svg style="left:246.0px;top:1395px" width="30" height="30" viewBox="0 0 30 30"><rect x="2" y="1" width="25" height="25" fill="#1f8fe0"/><rect x="2" y="1" width="25" height="6" fill="#0d6cc7"/><circle cx="14" cy="13" r="7" fill="#8fdcfb" stroke="#3ab0f0" stroke-width="2"/><path d="M19 18l8 7" stroke="#0f6ad0" stroke-width="3"/></svg><svg style="left:301.5px;top:1395px" width="30" height="30" viewBox="0 0 30 30"><circle cx="15" cy="16" r="13.5" fill="url(#gff)"/><circle cx="15.5" cy="15" r="7" fill="#7b3ff2"/><circle cx="16" cy="14" r="4.5" fill="#a56bff"/><path d="M18 1c6 3 10 9 9 15-3-5-6-7-9-8z" fill="#ffd43a"/></svg><svg style="left:356.5px;top:1395px" width="30" height="30" viewBox="0 0 30 30"><path d="M8 5L22 1L29 4V26L22 30L8 25z" fill="#b68cf0"/><path d="M1 10L6 8L22 22V30L1 14z" fill="#8a63cf"/><path d="M1 20L22 1V9L6 22L1 20z" fill="#6d47b5"/><path d="M22 1L29 4V26L22 30z" fill="#c9a2ff"/></svg><svg style="left:412.0px;top:1395px" width="30" height="30" viewBox="0 0 30 30"><ellipse cx="15" cy="17" rx="12.5" ry="7" fill="none" stroke="#f0a000" stroke-width="2.5"/><circle cx="15" cy="17" r="5" fill="#d43030"/><circle cx="15" cy="17" r="2" fill="#f08080"/><circle cx="4" cy="9" r="2" fill="#f5b000"/><circle cx="11" cy="5" r="2" fill="#f5b000"/><circle cx="19" cy="5" r="2" fill="#f5b000"/><circle cx="26" cy="9" r="2" fill="#f5b000"/></svg><svg style="left:466.5px;top:1395px" width="30" height="30" viewBox="0 0 30 30"><path d="M22 1L29 5V25L22 29L8 16L3 20L1 18V12L3 10L8 14z" fill="#1a8fe0"/><path d="M22 1L29 5V25L22 29z" fill="#2aa5f0"/><path d="M22 8L13 15L22 22z" fill="#dadada"/></svg><svg style="left:521.0px;top:1395px" width="30" height="30" viewBox="0 0 30 30"><rect x="1" y="1" width="28" height="28" fill="#bf0000"/><path d="M8 6h10v3h-7v4h6v3h-6v8H8z" fill="#fff"/><path d="M14 16h9v2.5l-5 5h5V26h-9v-2.5l5-5h-5z" fill="#fff"/></svg><svg style="left:576.5px;top:1395px" width="30" height="30" viewBox="0 0 30 30"><circle cx="15" cy="15" r="11.5" fill="#c00000" stroke="#c00000" stroke-width="5" stroke-dasharray="3.2 2.5"/><circle cx="15" cy="15" r="11" fill="#c00000"/><path d="M9 7h8v2h-6v4h5v2h-5v8H9z" fill="#fff"/><path d="M14 15h8v2l-5 5h5v2h-8v-2l5-5h-5z" fill="#fff"/></svg><svg style="left:631.0px;top:1395px" width="30" height="30" viewBox="0 0 30 30"><path d="M15 1c4 3 9 4 13 4v9c0 8-6 13-13 16C8 27 2 22 2 14V5c4 0 9-1 13-4z" fill="#1b8ae6"/><path d="M15 1c-4 3-9 4-13 4v9h13z" fill="#3cc6f5"/><path d="M15 14h13c0 8-6 13-13 16z" fill="#0a5fb0"/></svg><svg style="left:687.0px;top:1395px" width="30" height="30" viewBox="0 0 30 30"><rect x="1" y="0.5" width="29" height="29" rx="3" fill="#215483"/><path d="M5 7c4 0 7 4 9 9s5 7 8 8" stroke="#dde8f2" stroke-width="1.3" fill="none"/><path d="M8 9c1 4 3 8 6 10" stroke="#dde8f2" stroke-width="1" fill="none"/><path d="M21 3l4 4" stroke="#fff" stroke-width="2"/></svg><svg style="left:741.5px;top:1395px" width="30" height="30" viewBox="0 0 30 30"><path d="M2 6C2 1 9 0 10.5 4V15C9.5 21 5 21 4 18C2 13 2 10 2 6z" fill="#336791"/><ellipse cx="16" cy="8.5" rx="7" ry="7.8" fill="#336791"/><rect x="15" y="13" width="6.5" height="16" rx="3.2" fill="#336791"/><path d="M20.5 3C23 0 28.5 1 28.5 6C28.5 11 26.5 15.5 23 15.5L20.5 12z" fill="#336791"/><path d="M14.5 19V10.5C14.5 8 11 8 10.5 10.5V16C11 18 13 18.5 14.5 19" fill="none" stroke="#9bb8d3" stroke-width="1"/><path d="M20.5 16V11C21 8.5 24 8.5 24.5 11V14" fill="none" stroke="#9bb8d3" stroke-width="1"/><path d="M8.5 22.5l5-2M22 20.5l4.5 1" stroke="#336791" stroke-width="1.2"/></svg><svg style="left:796.5px;top:1395px" width="30" height="30" viewBox="0 0 30 30"><path d="M7 10c4-3 10-4 14-3l6-5c1 4 0 9-3 12c-2 4-8 6-12 5c-3 0-7-2-8-5z" fill="#6e6a5e"/><circle cx="6" cy="15" r="4.5" fill="#222"/><circle cx="5" cy="14" r="1.5" fill="#888"/><circle cx="13" cy="12" r="2.3" fill="#fff"/><circle cx="18" cy="11.5" r="2.3" fill="#fff"/><circle cx="13.5" cy="12.5" r="1" fill="#000"/><circle cx="18.5" cy="12" r="1" fill="#000"/><path d="M17 18l11 8" stroke="#c87a2a" stroke-width="2"/></svg><svg style="left:852.0px;top:1395px" width="30" height="30" viewBox="0 0 30 30"><rect x="2" y="4" width="16" height="17" fill="#ffd84a"/><ellipse cx="10" cy="4.5" rx="8" ry="3.5" fill="#f0a858"/><ellipse cx="10" cy="21" rx="8" ry="3" fill="#ffd84a"/><path d="M21 1h7v7M1 22v7h7" stroke="#3aa03a" stroke-width="2" fill="none"/><path d="M13 14l14 14M27 14L13 28" stroke="#f07c20" stroke-width="2.5"/></svg><svg style="left:906.5px;top:1395px" width="30" height="30" viewBox="0 0 30 30"><defs><linearGradient id="gnp2" x1="0" y1="0" x2="0" y2="1"><stop offset="0" stop-color="#f2f6f8"/><stop offset="0.38" stop-color="#e8f0f4"/><stop offset="0.5" stop-color="#d8f868"/><stop offset="0.75" stop-color="#80cc40"/><stop offset="1" stop-color="#008000"/></linearGradient></defs><path d="M1.5 0.5H17L23.5 6V29H1.5z" fill="url(#gnp2)" stroke="#8a8a8a" stroke-width="1.2"/><rect x="2" y="27" width="21" height="2" fill="#f4f4f4"/><rect x="4.5" y="11" width="4" height="10.5" rx="2" fill="none" stroke="#555" stroke-width="1.3"/><path d="M9 16.5h8" stroke="#111" stroke-width="1.2"/><circle cx="11.5" cy="16.5" r="1" fill="#111"/><circle cx="15.3" cy="16.5" r="1" fill="#111"/><path d="M26 3L17 22" stroke="#e8a010" stroke-width="3"/><path d="M26.3 2.4l0.9-1.8" stroke="#c02020" stroke-width="3"/><path d="M17 22l-0.8 2" stroke="#555" stroke-width="1.5"/></svg><svg style="left:961.0px;top:1395px" width="30" height="30" viewBox="0 0 30 30"><path d="M1 1h19l8 8v20H1z" fill="#22a33a" rx="3"/><path d="M20 1l8 8h-8z" fill="#6fe05a"/><rect x="6" y="12" width="12" height="2" fill="#e0f5e0"/><rect x="6" y="15.5" width="12" height="2" fill="#e0f5e0"/><rect x="6" y="19" width="12" height="2" fill="#e0f5e0"/><rect x="13" y="18" width="9" height="6" fill="#8ed88e"/></svg><svg style="left:1016.0px;top:1395px" width="30" height="30" viewBox="0 0 30 30"><path d="M1 1h19l8 8v20H1z" fill="#1a7fd6"/><path d="M20 1l8 8h-8z" fill="#38c5f5"/><rect x="5" y="12" width="9" height="1.6" fill="#e8f4ff"/><rect x="5" y="15" width="9" height="1.6" fill="#e8f4ff"/><rect x="16" y="12" width="6" height="5" fill="#9fd0ff"/><rect x="5" y="19" width="18" height="2.2" fill="#7fb8ee"/><rect x="5" y="23" width="7" height="1.6" fill="#e8f4ff"/></svg><svg style="left:1071.0px;top:1395px" width="30" height="30" viewBox="0 0 30 30"><rect x="1" y="0.5" width="29" height="29" rx="4" fill="url(#gmr)"/><text x="3" y="20" font-family="Liberation Sans" font-weight="bold" font-size="11" fill="#1838d8">m</text><text x="13" y="21" font-family="Liberation Sans" font-weight="bold" font-size="17" fill="#e8e8e8">R</text></svg><svg style="left:1126.5px;top:1395px" width="30" height="30" viewBox="0 0 30 30"><circle cx="12.5" cy="11" r="10.8" fill="#2f7fe0"/><circle cx="14" cy="8" r="5" fill="#4fc0ff" opacity="0.7"/><path d="M3 7c3-2 6 0 7 3s-3 3-4 1z" fill="#28c028"/><ellipse cx="12" cy="17.5" rx="5" ry="3.2" fill="#22a030" transform="rotate(25 12 17.5)"/><path d="M1 3c5-2 9 0 12 4l1-3v8H6l3-1C7 8 4 6 1 7z" fill="#f8b820"/><rect x="15.5" y="7.5" width="13.5" height="20.5" fill="#a8acb0"/><rect x="15.5" y="7.5" width="5" height="20.5" fill="#d6dadc"/><path d="M16.5 11h3M16.5 14h3M16.5 17h3M16.5 20h3" stroke="#8a9096" stroke-width="1"/><circle cx="18.5" cy="25.5" r="1.3" fill="#30c030"/></svg><svg style="left:1180.0px;top:1395px" width="32" height="30" viewBox="0 0 32 30"><rect x="1" y="3.5" width="30" height="22" rx="2" fill="#3a3a3a"/><rect x="11" y="3.5" width="10" height="3" fill="#777"/><path d="M5 11l6 4l-6 4" stroke="#ddd" stroke-width="2.2" fill="none"/><rect x="13" y="18" width="9" height="2.2" fill="#ddd"/></svg><svg style="left:1236.5px;top:1395px" width="30" height="30" viewBox="0 0 30 30"><circle cx="15" cy="15" r="14" fill="#fafafa"/><path d="M9 24L15 7L21 24M11 18h8" stroke="#3b78e7" stroke-width="2.4" fill="none"/><circle cx="15" cy="7" r="2" fill="#555"/><path d="M21 14l3 2l-3 2z" fill="#30a040"/></svg><svg style="left:1291.0px;top:1395px" width="30" height="30" viewBox="0 0 30 30"><circle cx="15" cy="15" r="14.5" fill="#ea4335"/><path d="M15 15L2.5 22.3A14.5 14.5 0 0 0 15 29.5z" fill="#34a853"/><path d="M15 15L27.5 7.7A14.5 14.5 0 0 1 15 29.5z" fill="#fbbc04"/><path d="M15 15L2.5 22.3A14.5 14.5 0 0 1 2.5 7.7z" fill="#34a853"/><circle cx="15" cy="15" r="6.5" fill="#fff"/><circle cx="15" cy="15" r="5" fill="#4285f4"/></svg><svg style="left:1347.0px;top:1395px" width="30" height="30" viewBox="0 0 30 30"><path d="M1 1h20l9 12v16H4L1 20z" fill="#07c3f2"/><path d="M1 18L14 29H4z" fill="#fcf84a"/><path d="M1 1h14L1 12z" fill="#087cfa"/><rect x="6" y="6" width="18" height="18" fill="#000"/><text x="7.5" y="15" font-family="Liberation Sans" font-weight="bold" font-size="8" fill="#fff">WS</text><rect x="8" y="20" width="6" height="1.3" fill="#fff"/></svg><svg style="left:1402.0px;top:1395px" width="30" height="30" viewBox="0 0 30 30"><rect x="0" y="0" width="30" height="30" fill="#ffffd0"/><text x="0.5" y="13" font-family="Liberation Sans" font-weight="bold" font-size="15" fill="#101070" textLength="29" lengthAdjust="spacingAndGlyphs">VB-</text><text x="0.5" y="28.5" font-family="Liberation Sans" font-weight="bold" font-size="15" fill="#101070" textLength="29" lengthAdjust="spacingAndGlyphs">NET</text></svg><svg style="left:1455.5px;top:1395px" width="32" height="30" viewBox="0 0 32 30"><path d="M10.5 12.5V9a5.5 5.5 0 0 1 11 0v3.5" stroke="#9a9a9a" stroke-width="2.6" fill="none"/><rect x="7" y="12" width="17" height="12.5" rx="2" fill="#c8cacd" stroke="#606468" stroke-width="1"/><rect x="8" y="13" width="15" height="3" fill="#eceef0"/><path d="M0.5 0.5H12.5L9.5 4L14 9L9.5 12.5L5 8L1 12z" fill="#3cc4ec" stroke="#0a78d0" stroke-width="1"/><path d="M31 29.5H17.5L21 26L16.5 21L21.5 16.5L26 21L30 17z" fill="#70d820" stroke="#48a010" stroke-width="1"/></svg><svg style="left:1511.5px;top:1395px" width="30" height="30" viewBox="0 0 30 30"><ellipse cx="14" cy="21" rx="11" ry="7" fill="#f0b800"/><circle cx="14" cy="8" r="6" fill="#f7c520"/><path d="M18 8l7 1l-6 3z" fill="#f08020"/><circle cx="12.5" cy="6.5" r="1.2" fill="#333"/></svg><svg style="left:1567.5px;top:1395px" width="28" height="30" viewBox="0 0 28 30"><rect x="2" y="3" width="24" height="25" rx="1" fill="#3fb8e8"/><rect x="2" y="26" width="24" height="2.5" fill="#a04810"/><path d="M6 1.5v3M11 1.5v3M16 1.5v3M21 1.5v3" stroke="#106a9a" stroke-width="2"/><path d="M6 10h16M6 14h16M6 18h16M6 22h12" stroke="#1a5f8a" stroke-width="1.6"/></svg><svg style="left:1622.5px;top:1395px" width="28" height="30" viewBox="0 0 28 30"><rect x="7" y="6" width="14" height="3" fill="#32d232"/><rect x="12" y="1" width="4" height="12" fill="#32d232"/><rect x="7" y="11" width="14" height="3" fill="#d42525"/><path d="M4 19h4v6h12v-4h-8v-4h11v11H20v2H7v-2H4z" fill="#363636"/></svg><div class="a" style="left:148.0px;top:1430px;width:7px;height:4px;border-radius:2px;background:#777"></div><div class="a" style="left:313.0px;top:1430px;width:7px;height:4px;border-radius:2px;background:#777"></div><div class="a" style="left:368.0px;top:1430px;width:7px;height:4px;border-radius:2px;background:#777"></div><div class="a" style="left:423.0px;top:1430px;width:7px;height:4px;border-radius:2px;background:#777"></div><div class="a" style="left:478.0px;top:1430px;width:7px;height:4px;border-radius:2px;background:#777"></div><div class="a" style="left:698.0px;top:1430px;width:7px;height:4px;border-radius:2px;background:#777"></div><div class="a" style="left:918.0px;top:1430px;width:7px;height:4px;border-radius:2px;background:#777"></div><div class="a" style="left:1358.0px;top:1430px;width:7px;height:4px;border-radius:2px;background:#777"></div><div class="a" style="left:1413.0px;top:1430px;width:7px;height:4px;border-radius:2px;background:#777"></div><div class="a" style="left:1468.0px;top:1430px;width:7px;height:4px;border-radius:2px;background:#777"></div><div class="a" style="left:1523.0px;top:1430px;width:7px;height:4px;border-radius:2px;background:#777"></div><div class="a" style="left:1578.0px;top:1430px;width:7px;height:4px;border-radius:2px;background:#777"></div><div class="a" style="left:1627px;top:1430px;width:20px;height:4px;border-radius:2px;background:#0067c0"></div>

<svg style="left:2150px;top:1404px" width="16" height="12"><path d="M1.5 10L8 3.5L14.5 10" stroke="#222" stroke-width="1.3" fill="none"/></svg>
<svg style="left:2188px;top:1400px" width="20" height="20"><rect width="20" height="20" fill="#d8002a"/><path d="M5 5h6v6M5 11l6-6" stroke="#fff" stroke-width="2" fill="none"/><rect x="15" y="10" width="2" height="5" fill="#fff"/><rect x="15" y="16.5" width="2" height="2" fill="#fff"/></svg>
<svg style="left:2228px;top:1400px" width="20" height="20"><rect width="20" height="20" fill="#ef443b"/><path d="M4 10l3.5-3.5L11 10l-3.5 3.5z" fill="#fff"/><path d="M12 6l4 4l-4 4" stroke="#fff" stroke-width="1.5" fill="none"/></svg>
<svg style="left:2270px;top:1399px" width="20" height="22"><rect x="4.5" y="0.5" width="6" height="5" fill="none" stroke="#222"/><rect x="2.5" y="5.5" width="10" height="15" fill="none" stroke="#222"/><path d="M11 19l3 2l4-5" stroke="#222" fill="none"/></svg>
<svg style="left:2309px;top:1399px" width="18" height="22"><rect x="2" y="1" width="14" height="20" rx="7" fill="#e4e4e4" stroke="#cfcfcf"/><path d="M6 12l6 5M12 12l-6 5" stroke="#888" stroke-width="1"/></svg>
<div class="a" style="left:2348px;top:1400px;width:20px;height:20px;border:1px solid #555;background:#f4f4f4"></div>
<svg style="left:2387px;top:1399px" width="22" height="22"><rect x="1.5" y="3.5" width="15" height="12" fill="none" stroke="#222"/><path d="M6 19.5h8M10 16v3" stroke="#222"/><rect x="15.5" y="1.5" width="4" height="7" rx="1" fill="#f0f0f0" stroke="#222"/><path d="M17.5 9v10" stroke="#222"/></svg>
<svg style="left:2416px;top:1400px" width="24" height="20"><path d="M2 7h4l5-5v16l-5-5H2z" fill="none" stroke="#222" stroke-width="1.2"/><path d="M14 7a4 4 0 0 1 0 6M17 4.5a8 8 0 0 1 0 11M20 2a11 11 0 0 1 0 16" stroke="#222" stroke-width="1.2" fill="none"/></svg>

<div class="t" style="left:2500.50px;top:1390.46px;transform:scaleX(0.9266);transform-origin:0 0;color:#111">11:39</div>
<div class="t" style="left:2458.50px;top:1410.46px;transform:scaleX(0.9740);transform-origin:0 0;color:#111">25/02/2025</div>
</body></html>
